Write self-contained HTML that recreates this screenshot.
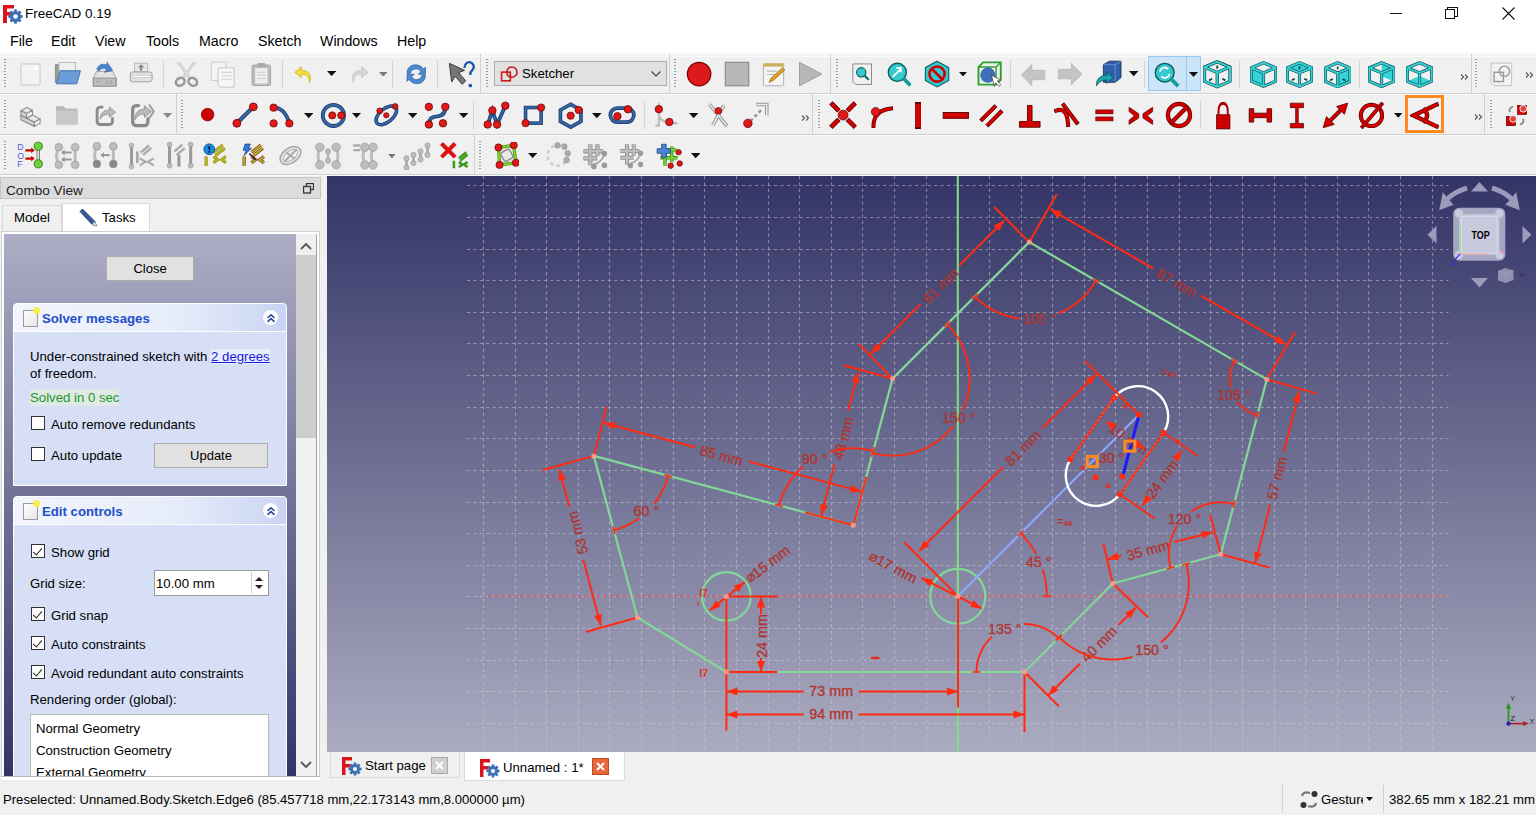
<!DOCTYPE html>
<html><head><meta charset="utf-8"><title>FreeCAD</title>
<style>
*{box-sizing:border-box;margin:0;padding:0}
html,body{width:1536px;height:815px;overflow:hidden;background:#f0f0f0;font-family:"Liberation Sans",sans-serif;color:#000}
.a{position:absolute}
.t{position:absolute;white-space:pre;line-height:1}
#title{left:0;top:0;width:1536px;height:53px;background:#fff}
#tb{left:0;top:53px;width:1536px;height:123px;background:#f0f0f0}
.row{position:absolute;left:0;width:1536px;height:1px;background:#cfcfcf;box-shadow:0 1px 0 #fafafa}
.vsep{position:absolute;width:1px;background:#d9d9d9}
.grip{position:absolute;width:2px;background-image:linear-gradient(#9a9a9a 50%,transparent 50%);background-size:2px 3px}
#view{left:327px;top:176px;width:1209px;height:576px;background:linear-gradient(#333366,#ababc1)}
#combo{left:0;top:176px;width:327px;height:609px;background:#f0f0f0}
.cb{position:absolute;width:14px;height:14px;border:1px solid #333;background:#fff}
.cb.on:after{content:"";position:absolute;left:3px;top:1px;width:4px;height:8px;border:solid #222;border-width:0 1.3px 1.3px 0;transform:rotate(40deg)}
.btn{position:absolute;background:#e1e1e1;border:1px solid #adadad;font-size:13px;text-align:center}
.box{position:absolute;background:#d6dff6;border:1px solid #fff;border-radius:4px 4px 0 0}
.boxh{position:absolute;left:0;top:0;right:0;height:28px;background:linear-gradient(90deg,#f2f5fc,#e6ecfa 60%,#c8d4f2);border-bottom:1px solid #fff;border-radius:4px 4px 0 0}
.boxh .t{font-weight:bold;color:#2150c8;font-size:13.2px}
.col{position:absolute;width:17px;height:17px;border-radius:50%;background:#fff;border:1px solid #c9d3ee}
</style></head><body>
<div id="title" class="a">
  <svg class="a" style="left:2px;top:4px" width="22" height="20" viewBox="0 0 22 20">
    <path d="M1 1h11v3.5H5v3.5h5v3.5H5V19H1z" fill="#d8141e"/>
    <g transform="translate(13.5 12.5)"><circle r="5.6" fill="#3f6fb4"/><circle r="2.2" fill="#fff"/>
    <g fill="#3f6fb4"><rect x="-1.4" y="-7.2" width="2.8" height="3"/><rect x="-1.4" y="4.2" width="2.8" height="3"/><rect x="-7.2" y="-1.4" width="3" height="2.8"/><rect x="4.2" y="-1.4" width="3" height="2.8"/>
    <rect x="-1.4" y="-7.2" width="2.8" height="3" transform="rotate(45)"/><rect x="-1.4" y="4.2" width="2.8" height="3" transform="rotate(45)"/><rect x="-7.2" y="-1.4" width="3" height="2.8" transform="rotate(45)"/><rect x="4.2" y="-1.4" width="3" height="2.8" transform="rotate(45)"/></g></g>
  </svg>
  <div class="t" style="left:25px;top:7px;font-size:13.5px;color:#000">FreeCAD 0.19</div>
  <div class="a" style="left:1390px;top:13px;width:12px;height:1px;background:#111"></div>
  <div class="a" style="left:1447px;top:7px;width:11px;height:10px;border:1px solid #111;border-left-width:1px"></div>
  <div class="a" style="left:1445px;top:9px;width:10px;height:10px;border:1px solid #111;background:#fff"></div>
  <svg class="a" style="left:1502px;top:7px" width="13" height="13"><path d="M0.5 0.5L12.5 12.5M12.5 0.5L0.5 12.5" stroke="#111" stroke-width="1.1"/></svg>
  <div class="t" style="left:10px;top:34px;font-size:14.2px">File</div>
  <div class="t" style="left:51px;top:34px;font-size:14.2px">Edit</div>
  <div class="t" style="left:95px;top:34px;font-size:14.2px">View</div>
  <div class="t" style="left:146px;top:34px;font-size:14.2px">Tools</div>
  <div class="t" style="left:199px;top:34px;font-size:14.2px">Macro</div>
  <div class="t" style="left:258px;top:34px;font-size:14.2px">Sketch</div>
  <div class="t" style="left:320px;top:34px;font-size:14.2px">Windows</div>
  <div class="t" style="left:397px;top:34px;font-size:14.2px">Help</div>
</div>
<div id="tb" class="a">
  <div class="row" style="top:-1px;height:4px;background:linear-gradient(#ffffff,#f0f0f0)"></div>
  <div class="row" style="top:40px"></div>
  <div class="row" style="top:81px"></div>
  <div class="row" style="top:121px"></div>
<div class="grip" style="left:3.7px;top:6px;height:30px"></div>
<div class="grip" style="left:486.3px;top:6px;height:30px"></div>
<div class="grip" style="left:673.5px;top:6px;height:30px"></div>
<div class="grip" style="left:836.0px;top:6px;height:30px"></div>
<div class="grip" style="left:1475.4px;top:6px;height:30px"></div>
<div class="vsep" style="left:163px;top:7px;height:28px;background:#d5d5d5"></div>
<div class="vsep" style="left:282px;top:7px;height:28px;background:#d5d5d5"></div>
<div class="vsep" style="left:392px;top:7px;height:28px;background:#d5d5d5"></div>
<div class="vsep" style="left:437px;top:7px;height:28px;background:#d5d5d5"></div>
<div class="vsep" style="left:1010px;top:7px;height:28px;background:#d5d5d5"></div>
<div class="vsep" style="left:1144px;top:7px;height:28px;background:#d5d5d5"></div>
<div class="vsep" style="left:1239px;top:7px;height:28px;background:#d5d5d5"></div>
<div class="vsep" style="left:1359px;top:7px;height:28px;background:#d5d5d5"></div>
<div class="vsep" style="left:480px;top:1px;height:39px;background:#d0d0d0"></div>
<div class="vsep" style="left:669px;top:1px;height:39px;background:#d0d0d0"></div>
<div class="vsep" style="left:830px;top:1px;height:39px;background:#d0d0d0"></div>
<div class="vsep" style="left:1471px;top:1px;height:39px;background:#d0d0d0"></div>
<svg class="a" style="left:19.0px;top:10.0px" width="23.0" height="23.0" viewBox="0 0 24 24" preserveAspectRatio="none"><rect x="2" y="1" width="20" height="22" rx="1.5" fill="#f3f3f3" stroke="#c4c4c4"/><circle cx="18" cy="5" r="2.2" fill="#fff"/></svg>
<svg class="a" style="left:53.0px;top:7.2px" width="28.6" height="28.6" viewBox="0 0 24 24" preserveAspectRatio="none"><path d="M2 4h6l1 1h8v14H2z" fill="#9a9a9a" stroke="#777" stroke-width="0.6"/><rect x="5" y="2" width="14" height="12" fill="#eee" stroke="#aaa" stroke-width="0.6"/><path d="M6 9h17l-3 11H3z" fill="#6b9bd8" stroke="#3d6fb0" stroke-width="0.8"/></svg>
<svg class="a" style="left:91.4px;top:7.8px" width="27.4" height="27.4" viewBox="0 0 24 24" preserveAspectRatio="none"><path d="M5 9h14l3 6v7H2v-7z" fill="#e2e2e2" stroke="#9a9a9a" stroke-width="0.8"/><rect x="2" y="15" width="20" height="7" fill="#bdbdbd" stroke="#8a8a8a" stroke-width="0.8"/><path d="M14 17v3M16 17v3M18 17v3M4 18h4" stroke="#999" stroke-width="0.8"/><path d="M5 7Q8 1 14 3.5V1l5 7-7 2 1.5-3Q9 5 7 9z" fill="#4a86cf" stroke="#2a5a9a" stroke-width="0.5"/></svg>
<svg class="a" style="left:128.4px;top:8.4px" width="26.3" height="26.3" viewBox="0 0 24 24" preserveAspectRatio="none"><rect x="6" y="2" width="12" height="8" fill="#e8e8e8" stroke="#aaa" stroke-width="0.7"/><path d="M12 3l-3 3h2v3h2V6h2z" fill="#888"/><rect x="2" y="10" width="20" height="9" rx="2" fill="#e0e0e0" stroke="#999" stroke-width="0.8"/><rect x="4" y="13" width="16" height="2" fill="#fff" stroke="#aaa" stroke-width="0.4"/></svg>
<svg class="a" style="left:174.2px;top:9.0px" width="25.0" height="25.0" viewBox="0 0 24 24" preserveAspectRatio="none"><path d="M4 0L15 15M20 0L9 15" stroke="#c4c4c4" stroke-width="2.6" stroke-linecap="round"/><path d="M4 0L15 15M20 0L9 15" stroke="#e8e8e8" stroke-width="1"/><ellipse cx="6" cy="19" rx="4.3" ry="3.6" transform="rotate(-30 6 19)" fill="none" stroke="#999" stroke-width="2.4"/><ellipse cx="18" cy="19" rx="4.3" ry="3.6" transform="rotate(30 18 19)" fill="none" stroke="#999" stroke-width="2.4"/></svg>
<svg class="a" style="left:209.4px;top:7.9px" width="27.3" height="27.3" viewBox="0 0 24 24" preserveAspectRatio="none"><rect x="2" y="1" width="13" height="16" fill="#f4f4f4" stroke="#c8c8c8" stroke-width="0.8"/><path d="M8 6h14v17H10l-2-2z" fill="#f6f6f6" stroke="#c0c0c0" stroke-width="0.8"/><path d="M11 10h9M11 13h9M11 16h9" stroke="#d0d0d0"/></svg>
<svg class="a" style="left:248.6px;top:9.2px" width="24.6" height="24.6" viewBox="0 0 24 24" preserveAspectRatio="none"><rect x="3" y="3" width="18" height="20" rx="1.5" fill="#bdbdbd" stroke="#999" stroke-width="0.8"/><rect x="6" y="6" width="12" height="15" fill="#eee"/><rect x="8" y="1" width="8" height="4" rx="1" fill="#aaa"/><path d="M8 10h8M8 13h8M8 16h8" stroke="#ccc"/></svg>
<svg class="a" style="left:293.5px;top:10.5px" width="22.0" height="22.0" viewBox="0 0 24 24" preserveAspectRatio="none"><path d="M8 3L1 9l7 6v-4c5 0 8 2 9 9 3-8-1-13-9-13z" fill="#f3dd3a" stroke="#c9a800" stroke-width="0.8"/></svg>
<svg class="a" style="left:326.5px;top:18.4px" width="9.3" height="5.1" viewBox="0 0 10 5.5"><path d="M0 0H10L5 5.5z" fill="#111"/></svg>
<svg class="a" style="left:346.8px;top:10.5px" width="22.0" height="22.0" viewBox="0 0 24 24" preserveAspectRatio="none"><path d="M16 3l7 6-7 6v-4c-5 0-8 2-9 9-3-8 1-13 9-13z" fill="#d6d6d6" stroke="#c0c0c0" stroke-width="0.8"/></svg>
<svg class="a" style="left:379.0px;top:18.7px" width="8.4" height="4.6" viewBox="0 0 10 5.5"><path d="M0 0H10L5 5.5z" fill="#777"/></svg>
<svg class="a" style="left:403.5px;top:9.2px" width="24.5" height="24.5" viewBox="0 0 24 24" preserveAspectRatio="none"><path d="M3 11C3 5 8 2 13 3c3 .5 5 2 6 4l2-2v7h-7l2.5-2.5C15 7 13 6.5 11 6.8 8 7.3 6.5 9 6.5 11z" fill="#4a8ad4" stroke="#2a5aa0" stroke-width="0.7"/><path d="M21 13c0 6-5 9-10 8-3-.5-5-2-6-4l-2 2v-7h7l-2.5 2.5C9 17 11 17.5 13 17.2 16 16.7 17.5 15 17.5 13z" fill="#4a8ad4" stroke="#2a5aa0" stroke-width="0.7"/></svg>
<svg class="a" style="left:446.6px;top:7.5px" width="28.0" height="28.0" viewBox="0 0 24 24" preserveAspectRatio="none"><path d="M2 2l13 6-5 2 6 7-3 3-6-7-3 5z" fill="#777" stroke="#333" stroke-width="0.8"/><path d="M15 6c0-3 2-5 4-5s4 2 4 4c0 3-3 3-3 6v1" fill="none" stroke="#1c58a8" stroke-width="2"/><circle cx="20" cy="21" r="1.6" fill="#1c58a8"/></svg>
<div class="a" style="left:494px;top:8px;width:173px;height:25px;background:#e1e1e1;border:1px solid #adadad"></div>
<svg class="a" style="left:500.0px;top:11.5px" width="19.0" height="19.0" viewBox="0 0 24 24" preserveAspectRatio="none"><rect x="2" y="9" width="11" height="11" fill="none" stroke="#cc1a1a" stroke-width="2"/><circle cx="15" cy="9" r="6.5" fill="none" stroke="#cc1a1a" stroke-width="2"/></svg>
<div class="t" style="left:522px;top:14px;font-size:13.2px">Sketcher</div>
<svg class="a" style="left:651px;top:18px" width="10" height="6"><path d="M0.5 0.5L5 5L9.5 0.5" fill="none" stroke="#444" stroke-width="1.2"/></svg>
<svg class="a" style="left:685.0px;top:7.4px" width="28.2" height="28.2" viewBox="0 0 24 24" preserveAspectRatio="none"><circle cx="12" cy="12" r="10" fill="#dd1a1a" stroke="#7a0000" stroke-width="1"/></svg>
<svg class="a" style="left:722.6px;top:7.4px" width="28.1" height="28.1" viewBox="0 0 24 24" preserveAspectRatio="none"><rect x="2" y="2" width="20" height="20" fill="#b8b8b8" stroke="#8a8a8a" stroke-width="1"/></svg>
<svg class="a" style="left:760.0px;top:8.0px" width="27.0" height="27.0" viewBox="0 0 24 24" preserveAspectRatio="none"><rect x="3" y="3" width="18" height="19" rx="1" fill="#f4f4f4" stroke="#aaa" stroke-width="0.8"/><rect x="3" y="2" width="18" height="3" fill="#c8b060"/><path d="M6 9h9M6 12h7" stroke="#bbb"/><path d="M8 19l2-4 10-9 2 2-10 9z" fill="#e8a020" stroke="#8a5a00" stroke-width="0.6"/></svg>
<svg class="a" style="left:796.4px;top:7.4px" width="28.1" height="28.1" viewBox="0 0 24 24" preserveAspectRatio="none"><path d="M3 2L22 12L3 22z" fill="#b8b8b8" stroke="#999" stroke-width="0.8"/></svg>
<svg class="a" style="left:851.0px;top:10.3px" width="22.4" height="22.4" viewBox="0 0 24 24" preserveAspectRatio="none"><path d="M2 1h20v22H5l-3-3z" fill="#f0f0f0" stroke="#555" stroke-width="0.7"/><circle cx="11" cy="10" r="5" fill="#36c8cc" stroke="#0a5a5c" stroke-width="1.2"/><path d="M14 13l5 5" stroke="#0a7a7c" stroke-width="2.5"/></svg>
<svg class="a" style="left:886.0px;top:7.9px" width="27.2" height="27.2" viewBox="0 0 24 24" preserveAspectRatio="none"><circle cx="10" cy="10" r="8" fill="#36c8cc" stroke="#0a5a5c" stroke-width="1.2"/><path d="M15.5 15.5l6 6" stroke="#159a9c" stroke-width="3.2"/><path d="M6 14l7-7M9 6h4v4" fill="none" stroke="#fff" stroke-width="1.6"/></svg>
<svg class="a" style="left:922.6px;top:7.4px" width="28.1" height="28.1" viewBox="0 0 24 24" preserveAspectRatio="none"><path d="M12 1l10 5.5v11L12 23 2 17.5v-11z" fill="#36c8cc" stroke="#0a5a5c" stroke-width="0.9"/><circle cx="12" cy="12" r="6.5" fill="none" stroke="#cc0000" stroke-width="2.2"/><path d="M7.5 7.5l9 9" stroke="#cc0000" stroke-width="2.2"/></svg>
<svg class="a" style="left:959.0px;top:18.8px" width="8.0" height="4.4" viewBox="0 0 10 5.5"><path d="M0 0H10L5 5.5z" fill="#111"/></svg>
<svg class="a" style="left:975.3px;top:7.4px" width="28.1" height="28.1" viewBox="0 0 24 24" preserveAspectRatio="none"><path d="M3 6l4-4h15v15l-4 4H3z" fill="none" stroke="#2aa02a" stroke-width="1.6"/><path d="M3 6h15v15M18 6l4-4" stroke="#2aa02a" stroke-width="1.2" fill="none"/><circle cx="11" cy="13" r="6.5" fill="#3e6fb8"/><path d="M14 13l8 4-3 1 3 3-1.5 1.5-3-3-1 3z" fill="#fff" stroke="#333" stroke-width="0.6"/></svg>
<svg class="a" style="left:1018.7px;top:7.5px" width="28.1" height="28.1" viewBox="0 0 24 24" preserveAspectRatio="none"><path d="M2 12l9-9v5h11v8H11v5z" fill="#c4c4c4" stroke="#b0b0b0" stroke-width="0.6"/></svg>
<svg class="a" style="left:1056.0px;top:7.4px" width="28.3" height="28.3" viewBox="0 0 24 24" preserveAspectRatio="none"><path d="M22 12l-9-9v5H2v8h11v5z" fill="#c4c4c4" stroke="#b0b0b0" stroke-width="0.6"/></svg>
<svg class="a" style="left:1093.6px;top:7.4px" width="28.2" height="28.2" viewBox="0 0 24 24" preserveAspectRatio="none"><path d="M8 4l5-3h10v14l-5 4H8z" fill="#2e5fa8" stroke="#132a50" stroke-width="0.7"/><path d="M8 4h10v15M18 4l5-3" stroke="#6a9ae0" stroke-width="0.7" fill="none"/><path d="M2 22c0-6 3-9 9-9v-3l5 5-5 5v-3c-4 0-6 1-9 5z" fill="#1aa5a8" stroke="#0a4a4c" stroke-width="0.6"/></svg>
<svg class="a" style="left:1128.8px;top:18.4px" width="9.4" height="5.2" viewBox="0 0 10 5.5"><path d="M0 0H10L5 5.5z" fill="#111"/></svg>
<div class="a" style="left:1148px;top:3px;width:53px;height:35px;background:#cce4f7;border:1px solid #99c9ef"></div>
<div class="a" style="left:1186px;top:4px;width:1px;height:33px;background:#99c9ef"></div>
<svg class="a" style="left:1153.4px;top:8.0px" width="28.1" height="28.1" viewBox="0 0 24 24" preserveAspectRatio="none"><circle cx="10" cy="10" r="8" fill="#36c8cc" stroke="#0a5a5c" stroke-width="1.2"/><path d="M15.5 15.5l6 6" stroke="#159a9c" stroke-width="3.2"/><path d="M6 9a4 4 0 0 1 7-2M14 11a4 4 0 0 1-7 2" fill="none" stroke="#fff" stroke-width="1.5"/></svg>
<svg class="a" style="left:1189.0px;top:18.5px" width="9.0" height="5.0" viewBox="0 0 10 5.5"><path d="M0 0H10L5 5.5z" fill="#111"/></svg>
<svg class="a" style="left:1203.0px;top:7.2px" width="28.5" height="28.5" viewBox="0 0 28 28" preserveAspectRatio="none"><path d="M14,1.8 L26.5,7 L26.5,21 L14,26.3 L1.5,21 L1.5,7Z M1.5,7 L14,12.3 L26.5,7 M14,12.3 L14,26.3" fill="none" stroke="#0b4446" stroke-width="3.2" stroke-linejoin="round"/><path d="M14,1.8 L26.5,7 L26.5,21 L14,26.3 L1.5,21 L1.5,7Z M1.5,7 L14,12.3 L26.5,7 M14,12.3 L14,26.3" fill="none" stroke="#35d0d4" stroke-width="2" stroke-linejoin="round"/><path d="M14 5.5v3M6 20l3-1.5M22 20l-3-1.5" stroke="#0b4446" stroke-width="1.7"/></svg>
<svg class="a" style="left:1249.6px;top:8.0px" width="27.0" height="27.0" viewBox="0 0 28 28" preserveAspectRatio="none"><polygon points="1.5,7 14,12.3 14,26.3 1.5,21" fill="#36d4d8"/><path d="M14,1.8 L26.5,7 L26.5,21 L14,26.3 L1.5,21 L1.5,7Z M1.5,7 L14,12.3 L26.5,7 M14,12.3 L14,26.3" fill="none" stroke="#0b4446" stroke-width="3.2" stroke-linejoin="round"/><path d="M14,1.8 L26.5,7 L26.5,21 L14,26.3 L1.5,21 L1.5,7Z M1.5,7 L14,12.3 L26.5,7 M14,12.3 L14,26.3" fill="none" stroke="#35d0d4" stroke-width="2" stroke-linejoin="round"/></svg>
<svg class="a" style="left:1285.7px;top:8.0px" width="27.0" height="27.0" viewBox="0 0 28 28" preserveAspectRatio="none"><polygon points="14,1.8 26.5,7 14,12.3 1.5,7" fill="#36d4d8"/><path d="M14,1.8 L26.5,7 L26.5,21 L14,26.3 L1.5,21 L1.5,7Z M1.5,7 L14,12.3 L26.5,7 M14,12.3 L14,26.3" fill="none" stroke="#0b4446" stroke-width="3.2" stroke-linejoin="round"/><path d="M14,1.8 L26.5,7 L26.5,21 L14,26.3 L1.5,21 L1.5,7Z M1.5,7 L14,12.3 L26.5,7 M14,12.3 L14,26.3" fill="none" stroke="#35d0d4" stroke-width="2" stroke-linejoin="round"/><path d="M14 5.5v3M6 20l3-1.5M22 20l-3-1.5" stroke="#0b4446" stroke-width="1.7"/></svg>
<svg class="a" style="left:1323.6px;top:7.8px" width="27.4" height="27.4" viewBox="0 0 28 28" preserveAspectRatio="none"><polygon points="14,12.3 26.5,7 26.5,21 14,26.3" fill="#36d4d8"/><path d="M14,1.8 L26.5,7 L26.5,21 L14,26.3 L1.5,21 L1.5,7Z M1.5,7 L14,12.3 L26.5,7 M14,12.3 L14,26.3" fill="none" stroke="#0b4446" stroke-width="3.2" stroke-linejoin="round"/><path d="M14,1.8 L26.5,7 L26.5,21 L14,26.3 L1.5,21 L1.5,7Z M1.5,7 L14,12.3 L26.5,7 M14,12.3 L14,26.3" fill="none" stroke="#35d0d4" stroke-width="2" stroke-linejoin="round"/><path d="M14 5.5v3M6 20l3-1.5M22 20l-3-1.5" stroke="#0b4446" stroke-width="1.7"/></svg>
<svg class="a" style="left:1368.0px;top:7.9px" width="27.2" height="27.2" viewBox="0 0 28 28" preserveAspectRatio="none"><polygon points="14,1.8 26.5,7 26.5,21 14,15.5" fill="#36d4d8"/><path d="M14,1.8 L26.5,7 L26.5,21 L14,26.3 L1.5,21 L1.5,7Z M1.5,7 L14,12.3 L26.5,7 M14,12.3 L14,26.3" fill="none" stroke="#0b4446" stroke-width="3.2" stroke-linejoin="round"/><path d="M14,1.8 L26.5,7 L26.5,21 L14,26.3 L1.5,21 L1.5,7Z M1.5,7 L14,12.3 L26.5,7 M14,12.3 L14,26.3" fill="none" stroke="#35d0d4" stroke-width="2" stroke-linejoin="round"/></svg>
<svg class="a" style="left:1405.5px;top:8.0px" width="27.1" height="27.1" viewBox="0 0 28 28" preserveAspectRatio="none"><polygon points="14,15.5 26.5,21 14,26.3 1.5,21" fill="#36d4d8"/><path d="M14,1.8 L26.5,7 L26.5,21 L14,26.3 L1.5,21 L1.5,7Z M1.5,7 L14,12.3 L26.5,7 M14,12.3 L14,26.3" fill="none" stroke="#0b4446" stroke-width="3.2" stroke-linejoin="round"/><path d="M14,1.8 L26.5,7 L26.5,21 L14,26.3 L1.5,21 L1.5,7Z M1.5,7 L14,12.3 L26.5,7 M14,12.3 L14,26.3" fill="none" stroke="#35d0d4" stroke-width="2" stroke-linejoin="round"/></svg>
<svg class="a" style="left:1459.5px;top:20.0px" width="9" height="8"><path d="M1 1.5L3.5 4L1 6.5M5 1.5L7.5 4L5 6.5" fill="none" stroke="#555" stroke-width="1.1"/></svg>
<svg class="a" style="left:1525.3px;top:18.0px" width="9" height="8"><path d="M1 1.5L3.5 4L1 6.5M5 1.5L7.5 4L5 6.5" fill="none" stroke="#555" stroke-width="1.1"/></svg>
<svg class="a" style="left:1489.3px;top:9.1px" width="24.7" height="24.7" viewBox="0 0 24 24" preserveAspectRatio="none"><path d="M2 1h20v22H5l-3-3z" fill="#f2f2f2" stroke="#bbb" stroke-width="0.8"/><rect x="5" y="10" width="9" height="9" fill="none" stroke="#999" stroke-width="1.4"/><circle cx="15" cy="9" r="5" fill="none" stroke="#999" stroke-width="1.4"/></svg>
<div class="grip" style="left:3.7px;top:47px;height:30px"></div>
<div class="grip" style="left:181.3px;top:47px;height:30px"></div>
<div class="grip" style="left:817.5px;top:47px;height:30px"></div>
<div class="grip" style="left:1489.5px;top:47px;height:30px"></div>
<div class="vsep" style="left:473px;top:48px;height:28px;background:#d5d5d5"></div>
<div class="vsep" style="left:644px;top:48px;height:28px;background:#d5d5d5"></div>
<div class="vsep" style="left:1200px;top:48px;height:28px;background:#d5d5d5"></div>
<div class="vsep" style="left:176px;top:41px;height:40px;background:#d0d0d0"></div>
<div class="vsep" style="left:812px;top:41px;height:40px;background:#d0d0d0"></div>
<div class="vsep" style="left:1484px;top:41px;height:40px;background:#d0d0d0"></div>
<svg class="a" style="left:18.7px;top:50.8px" width="23.0" height="23.0" viewBox="0 0 24 24" preserveAspectRatio="none"><g fill="#e6e6e6" stroke="#8a8a8a" stroke-width="1.1" stroke-linejoin="round"><path d="M2 7L8 3.5L14 6.5L8 10z"/><path d="M2 7L8 10V15L2 12z" fill="#d0d0d0"/><path d="M8 10L14 6.5V11.5L8 15z" fill="#f2f2f2"/><path d="M8 15L14 11.5L22 15.5L16 19z"/><path d="M2 12L16 19V23.5L2 16.5z" fill="#d0d0d0"/><path d="M16 19L22 15.5V20L16 23.5z" fill="#f2f2f2"/></g></svg>
<svg class="a" style="left:54.0px;top:49.4px" width="25.7" height="25.7" viewBox="0 0 24 24" preserveAspectRatio="none"><path d="M2 4h7l2 2h11v15H2z" fill="#b8b8b8"/><rect x="2" y="8" width="20" height="13" fill="#c8c8c8"/></svg>
<svg class="a" style="left:92.6px;top:50.0px" width="24.6" height="24.6" viewBox="0 0 24 24" preserveAspectRatio="none"><path d="M9 4H7a3 3 0 0 0-3 3v11a3 3 0 0 0 3 3h9a3 3 0 0 0 3-3v-3" fill="none" stroke="#8a8a8a" stroke-width="2.8" stroke-linecap="round"/><path d="M7 16c0-6 3-9 9-9V4l6 5-6 5v-3c-4 0-7 1-9 5z" fill="#bbb" stroke="#888" stroke-width="0.7"/></svg>
<svg class="a" style="left:127.7px;top:48.2px" width="28.1" height="28.1" viewBox="0 0 24 24" preserveAspectRatio="none"><path d="M9 4H7a3 3 0 0 0-3 3v11a3 3 0 0 0 3 3h7a3 3 0 0 0 3-3v-3" fill="none" stroke="#8a8a8a" stroke-width="2.8" stroke-linecap="round"/><path d="M6 16c0-6 3-9 8-9V4l6 5-6 5v-3c-3 0-6 1-8 5z" fill="#bbb" stroke="#888" stroke-width="0.7"/><path d="M18 3l4 6-4 6" fill="none" stroke="#999" stroke-width="1.6"/></svg>
<svg class="a" style="left:163.0px;top:60.0px" width="9.0" height="5.0" viewBox="0 0 10 5.5"><path d="M0 0H10L5 5.5z" fill="#888"/></svg>
<svg class="a" style="left:200.4px;top:54.4px" width="15.2" height="15.2" viewBox="0 0 24 24" preserveAspectRatio="none"><circle cx="12" cy="12" r="10" fill="#cc0000" stroke="#6a0000" stroke-width="1"/></svg>
<svg class="a" style="left:230.8px;top:48.2px" width="28.2" height="28.2" viewBox="0 0 24 24" preserveAspectRatio="none"><path d="M5 19L19 5" stroke="#1c3a6a" stroke-width="3.6"/><path d="M5 19L19 5" stroke="#3465a4" stroke-width="2.2"/><circle cx="5" cy="19" r="3.4" fill="#e01818" stroke="#5c0000" stroke-width="0.6"/><circle cx="19" cy="5" r="3.4" fill="#e01818" stroke="#5c0000" stroke-width="0.6"/></svg>
<svg class="a" style="left:268.3px;top:48.8px" width="27.0" height="27.0" viewBox="0 0 24 24" preserveAspectRatio="none"><path d="M5 5Q15 5 19 19" fill="none" stroke="#1c3a6a" stroke-width="3.4"/><path d="M5 5Q15 5 19 19" fill="none" stroke="#3465a4" stroke-width="2"/><circle cx="5" cy="5" r="3.3" fill="#e01818" stroke="#5c0000" stroke-width="0.6"/><circle cx="19" cy="19" r="3.3" fill="#e01818" stroke="#5c0000" stroke-width="0.6"/><circle cx="5" cy="19" r="3.3" fill="#e01818" stroke="#5c0000" stroke-width="0.6"/></svg>
<svg class="a" style="left:303.5px;top:59.9px" width="9.4" height="5.2" viewBox="0 0 10 5.5"><path d="M0 0H10L5 5.5z" fill="#111"/></svg>
<svg class="a" style="left:320.0px;top:48.9px" width="26.8" height="26.8" viewBox="0 0 24 24" preserveAspectRatio="none"><circle cx="12" cy="12" r="9.5" fill="none" stroke="#1c3a6a" stroke-width="3.4"/><circle cx="12" cy="12" r="9.5" fill="none" stroke="#3465a4" stroke-width="2"/><circle cx="11" cy="12" r="3.2" fill="#e01818" stroke="#5c0000" stroke-width="0.6"/><circle cx="19" cy="12" r="3.2" fill="#e01818" stroke="#5c0000" stroke-width="0.6"/></svg>
<svg class="a" style="left:352.0px;top:60.0px" width="9.0" height="5.0" viewBox="0 0 10 5.5"><path d="M0 0H10L5 5.5z" fill="#111"/></svg>
<svg class="a" style="left:373.4px;top:49.0px" width="26.6" height="26.6" viewBox="0 0 24 24" preserveAspectRatio="none"><ellipse cx="12" cy="12" rx="11" ry="6" transform="rotate(-40 12 12)" fill="none" stroke="#1c3a6a" stroke-width="3.2"/><ellipse cx="12" cy="12" rx="11" ry="6" transform="rotate(-40 12 12)" fill="none" stroke="#3465a4" stroke-width="1.8"/><circle cx="6" cy="8" r="2.6" fill="#e01818" stroke="#5c0000" stroke-width="0.6"/><circle cx="20" cy="4" r="2.6" fill="#e01818" stroke="#5c0000" stroke-width="0.6"/><circle cx="12" cy="12" r="2.4" fill="#e01818" stroke="#5c0000" stroke-width="0.6"/></svg>
<svg class="a" style="left:407.8px;top:59.9px" width="9.4" height="5.2" viewBox="0 0 10 5.5"><path d="M0 0H10L5 5.5z" fill="#111"/></svg>
<svg class="a" style="left:423.4px;top:48.2px" width="28.2" height="28.2" viewBox="0 0 24 24" preserveAspectRatio="none"><path d="M5 20Q5 13 12 13T19 5" fill="none" stroke="#1c3a6a" stroke-width="3.2"/><path d="M5 20Q5 13 12 13T19 5" fill="none" stroke="#3465a4" stroke-width="1.8"/><circle cx="5" cy="5" r="3.2" fill="#e01818" stroke="#5c0000" stroke-width="0.6"/><circle cx="19" cy="5" r="3.2" fill="#e01818" stroke="#5c0000" stroke-width="0.6"/><circle cx="5" cy="20" r="3.2" fill="#e01818" stroke="#5c0000" stroke-width="0.6"/><circle cx="17" cy="19" r="3.2" fill="#e01818" stroke="#5c0000" stroke-width="0.6"/></svg>
<svg class="a" style="left:458.8px;top:60.0px" width="9.2" height="5.1" viewBox="0 0 10 5.5"><path d="M0 0H10L5 5.5z" fill="#111"/></svg>
<svg class="a" style="left:482.8px;top:48.2px" width="28.2" height="28.2" viewBox="0 0 24 24" preserveAspectRatio="none"><path d="M4 20L8 8L12 20L19 4" fill="none" stroke="#1c3a6a" stroke-width="3.2"/><path d="M4 20L8 8L12 20L19 4" fill="none" stroke="#3465a4" stroke-width="1.8"/><circle cx="4" cy="20" r="3.2" fill="#e01818" stroke="#5c0000" stroke-width="0.6"/><circle cx="8" cy="8" r="3.2" fill="#e01818" stroke="#5c0000" stroke-width="0.6"/><circle cx="12" cy="20" r="3.2" fill="#e01818" stroke="#5c0000" stroke-width="0.6"/><circle cx="19" cy="4" r="3.2" fill="#e01818" stroke="#5c0000" stroke-width="0.6"/></svg>
<svg class="a" style="left:520.3px;top:48.9px" width="26.7" height="26.7" viewBox="0 0 24 24" preserveAspectRatio="none"><rect x="5" y="5" width="14" height="14" fill="none" stroke="#1c3a6a" stroke-width="3.2"/><rect x="5" y="5" width="14" height="14" fill="none" stroke="#3465a4" stroke-width="1.8"/><circle cx="5" cy="19" r="3.3" fill="#e01818" stroke="#5c0000" stroke-width="0.6"/><circle cx="19" cy="5" r="3.3" fill="#e01818" stroke="#5c0000" stroke-width="0.6"/></svg>
<svg class="a" style="left:557.0px;top:48.6px" width="27.4" height="27.4" viewBox="0 0 24 24" preserveAspectRatio="none"><path d="M12 2l9 5v10l-9 5-9-5V7z" fill="none" stroke="#1c3a6a" stroke-width="3.2"/><path d="M12 2l9 5v10l-9 5-9-5V7z" fill="none" stroke="#3465a4" stroke-width="1.8"/><circle cx="12" cy="12" r="3.2" fill="#e01818" stroke="#5c0000" stroke-width="0.6"/><circle cx="19" cy="7" r="3.2" fill="#e01818" stroke="#5c0000" stroke-width="0.6"/></svg>
<svg class="a" style="left:592.0px;top:59.9px" width="9.6" height="5.3" viewBox="0 0 10 5.5"><path d="M0 0H10L5 5.5z" fill="#111"/></svg>
<svg class="a" style="left:607.8px;top:48.2px" width="28.2" height="28.2" viewBox="0 0 24 24" preserveAspectRatio="none"><rect x="2" y="6" width="20" height="12" rx="6" fill="none" stroke="#1c3a6a" stroke-width="3.2"/><rect x="2" y="6" width="20" height="12" rx="6" fill="none" stroke="#3465a4" stroke-width="1.8"/><circle cx="8" cy="13" r="3.2" fill="#e01818" stroke="#5c0000" stroke-width="0.6"/><circle cx="17" cy="7" r="3.2" fill="#e01818" stroke="#5c0000" stroke-width="0.6"/></svg>
<svg class="a" style="left:653.0px;top:48.3px" width="28.0" height="28.0" viewBox="0 0 24 24" preserveAspectRatio="none"><path d="M5 2v9Q5 18 16 19h5M2 21h4M5 14v8" fill="none" stroke="#bbb" stroke-width="1.8"/><circle cx="5" cy="7" r="3.2" fill="#e01818" stroke="#5c0000" stroke-width="0.6"/><circle cx="14" cy="18" r="3.2" fill="#e01818" stroke="#5c0000" stroke-width="0.6"/></svg>
<svg class="a" style="left:689.0px;top:59.9px" width="9.4" height="5.2" viewBox="0 0 10 5.5"><path d="M0 0H10L5 5.5z" fill="#111"/></svg>
<svg class="a" style="left:704.7px;top:49.0px" width="26.6" height="26.6" viewBox="0 0 24 24" preserveAspectRatio="none"><path d="M4 2l16 20M17 3L7 21" stroke="#8a8a8a" stroke-width="3"/><path d="M4 2l16 20M17 3L7 21" stroke="#f0f0f0" stroke-width="1.4"/><circle cx="12" cy="8" r="3" fill="#e01818" stroke="#5c0000" stroke-width="0.6"/></svg>
<svg class="a" style="left:742.0px;top:48.2px" width="28.3" height="28.3" viewBox="0 0 24 24" preserveAspectRatio="none"><path d="M7 17L17 7" stroke="#999" stroke-width="2.2" stroke-dasharray="3 2"/><path d="M12 3h9v9" fill="none" stroke="#999" stroke-width="3"/><path d="M12 3h9v9" fill="none" stroke="#eee" stroke-width="1.2"/><circle cx="5" cy="19" r="3.6" fill="#e01818" stroke="#5c0000" stroke-width="0.6"/></svg>
<svg class="a" style="left:800.7px;top:61.0px" width="9" height="8"><path d="M1 1.5L3.5 4L1 6.5M5 1.5L7.5 4L5 6.5" fill="none" stroke="#555" stroke-width="1.1"/></svg>
<svg class="a" style="left:829.0px;top:48.2px" width="28.2" height="28.2" viewBox="0 0 24 24" preserveAspectRatio="none"><path d="M3 3l4 4M21 3l-4 4M3 21l4-4M21 21l-4-4" fill="none" stroke="#5a0000" stroke-width="4.0" stroke-linecap="square"/><path d="M3 3l4 4M21 3l-4 4M3 21l4-4M21 21l-4-4" fill="none" stroke="#d40000" stroke-width="2.8" stroke-linecap="square"/><circle cx="12" cy="12" r="4.2" fill="#e01818" stroke="#5c0000" stroke-width="0.6"/></svg>
<svg class="a" style="left:868.4px;top:49.1px" width="26.3" height="26.3" viewBox="0 0 24 24" preserveAspectRatio="none"><path d="M5 22Q5 8 21 6" fill="none" stroke="#5a0000" stroke-width="3.5999999999999996" stroke-linecap="square"/><path d="M5 22Q5 8 21 6" fill="none" stroke="#d40000" stroke-width="2.4" stroke-linecap="square"/><circle cx="7" cy="9" r="4" fill="#e01818" stroke="#5c0000" stroke-width="0.6"/></svg>
<svg class="a" style="left:914.6px;top:49.0px" width="6.4" height="26.7" viewBox="0 0 24 24" preserveAspectRatio="none"><rect x="1" y="0.5" width="22" height="23" fill="#d40000" stroke="#5a0000" stroke-width="2"/></svg>
<svg class="a" style="left:941.5px;top:48.4px" width="27.7" height="27.7" viewBox="0 0 24 24" preserveAspectRatio="none"><rect x="1" y="10" width="22" height="5" fill="#d40000" stroke="#5a0000" stroke-width="0.8"/></svg>
<svg class="a" style="left:979.0px;top:49.9px" width="24.7" height="24.7" viewBox="0 0 24 24" preserveAspectRatio="none"><path d="M3 16L15 4M9 21L21 9" fill="none" stroke="#5a0000" stroke-width="4.0" stroke-linecap="square"/><path d="M3 16L15 4M9 21L21 9" fill="none" stroke="#d40000" stroke-width="2.8" stroke-linecap="square"/></svg>
<svg class="a" style="left:1016.0px;top:48.5px" width="27.5" height="27.5" viewBox="0 0 24 24" preserveAspectRatio="none"><path d="M10 3h4v14h7v5H3v-5h7z" fill="#d40000" stroke="#5a0000" stroke-width="0.8"/></svg>
<svg class="a" style="left:1054.0px;top:49.3px" width="26.0" height="26.0" viewBox="0 0 24 24" preserveAspectRatio="none"><path d="M2 8Q12 4 13 21M9 3l12 16" fill="none" stroke="#5a0000" stroke-width="3.8" stroke-linecap="square"/><path d="M2 8Q12 4 13 21M9 3l12 16" fill="none" stroke="#d40000" stroke-width="2.6" stroke-linecap="square"/></svg>
<svg class="a" style="left:1095.0px;top:52.9px" width="18.8" height="18.8" viewBox="0 0 24 24" preserveAspectRatio="none"><rect x="1" y="5" width="22" height="5" fill="#d40000" stroke="#5a0000" stroke-width="0.8"/><rect x="1" y="14" width="22" height="5" fill="#d40000" stroke="#5a0000" stroke-width="0.8"/></svg>
<svg class="a" style="left:1127.9px;top:49.5px" width="25.7" height="25.7" viewBox="0 0 24 24" preserveAspectRatio="none"><path d="M1 4l9 6v4l-9 6v-4l5-4-5-4zM23 4l-9 6v4l9 6v-4l-5-4 5-4z" fill="#d40000" stroke="#5a0000" stroke-width="0.7"/></svg>
<svg class="a" style="left:1165.0px;top:48.3px" width="28.0" height="28.0" viewBox="0 0 24 24" preserveAspectRatio="none"><circle cx="12" cy="12" r="9.5" fill="none" stroke="#5a0000" stroke-width="3.6"/><circle cx="12" cy="12" r="9.5" fill="none" stroke="#d40000" stroke-width="2.4"/><path d="M6 18L18 6" fill="none" stroke="#5a0000" stroke-width="3.5999999999999996" stroke-linecap="square"/><path d="M6 18L18 6" fill="none" stroke="#d40000" stroke-width="2.4" stroke-linecap="square"/></svg>
<svg class="a" style="left:1213.9px;top:49.0px" width="18.3" height="28.0" viewBox="0 0 24 24" preserveAspectRatio="none"><path d="M6 11V7a6 6 0 0 1 12 0v4" fill="none" stroke="#aa0000" stroke-width="2.6"/><rect x="3" y="11" width="18" height="12" fill="#d40000" stroke="#5a0000" stroke-width="0.8"/><path d="M3 14h18M3 17h18M3 20h18" stroke="#a00000" stroke-width="0.6"/></svg>
<svg class="a" style="left:1247.0px;top:48.9px" width="26.8" height="26.8" viewBox="0 0 24 24" preserveAspectRatio="none"><path d="M2 6h4v4h12V6h4v12h-4v-4H6v4H2z" fill="#d40000" stroke="#5a0000" stroke-width="0.8"/></svg>
<svg class="a" style="left:1288.5px;top:48.5px" width="15.9" height="27.0" viewBox="0 0 24 24" preserveAspectRatio="none"><path d="M2 1h20v4h-8v14h8v4H2v-4h8V5H2z" fill="#d40000" stroke="#5a0000" stroke-width="0.8"/></svg>
<svg class="a" style="left:1321.6px;top:48.8px" width="26.9" height="26.9" viewBox="0 0 24 24" preserveAspectRatio="none"><path d="M6 18L18 6" fill="none" stroke="#5a0000" stroke-width="3.5999999999999996" stroke-linecap="square"/><path d="M6 18L18 6" fill="none" stroke="#d40000" stroke-width="2.4" stroke-linecap="square"/><path d="M1 23l3-10 7 7zM23 1l-3 10-7-7z" fill="#d40000" stroke="#5a0000" stroke-width="0.7"/></svg>
<svg class="a" style="left:1358.3px;top:48.8px" width="26.9" height="26.9" viewBox="0 0 24 24" preserveAspectRatio="none"><circle cx="12" cy="12" r="9.5" fill="none" stroke="#5a0000" stroke-width="3.6"/><circle cx="12" cy="12" r="9.5" fill="none" stroke="#d40000" stroke-width="2.4"/><path d="M4 22L21 2" fill="none" stroke="#5a0000" stroke-width="3.4000000000000004" stroke-linecap="square"/><path d="M4 22L21 2" fill="none" stroke="#d40000" stroke-width="2.2" stroke-linecap="square"/></svg>
<svg class="a" style="left:1393.8px;top:60.2px" width="8.5" height="4.7" viewBox="0 0 10 5.5"><path d="M0 0H10L5 5.5z" fill="#111"/></svg>
<div class="a" style="left:1405px;top:42px;width:39px;height:38px;border:3px solid #ff8a20"></div>
<svg class="a" style="left:1410.0px;top:47.8px" width="29.0" height="29.0" viewBox="0 0 24 24" preserveAspectRatio="none"><path d="M22 3L3 12L22 21M12 7.5Q16.5 12 12 16.5" fill="none" stroke="#5a0000" stroke-width="3.5999999999999996" stroke-linecap="square"/><path d="M22 3L3 12L22 21M12 7.5Q16.5 12 12 16.5" fill="none" stroke="#d40000" stroke-width="2.4" stroke-linecap="square"/></svg>
<svg class="a" style="left:1474.2px;top:60.0px" width="9" height="8"><path d="M1 1.5L3.5 4L1 6.5M5 1.5L7.5 4L5 6.5" fill="none" stroke="#555" stroke-width="1.1"/></svg>
<svg class="a" style="left:1502.7px;top:48.8px" width="27.0" height="27.0" viewBox="0 0 24 24" preserveAspectRatio="none"><rect x="13" y="3" width="8" height="8" fill="#d40000" stroke="#5a0000" stroke-width="0.6"/><circle cx="18" cy="6" r="3" fill="#e04040" stroke="#fff" stroke-width="0.8"/><rect x="3" y="13" width="8" height="8" fill="#d40000" stroke="#5a0000" stroke-width="0.6"/><circle cx="9" cy="15" r="3" fill="#e04040" stroke="#fff" stroke-width="0.8"/><path d="M9 4Q5 5 6 9M15 20q4-1 3-5" fill="none" stroke="#888" stroke-width="1.6"/></svg>
<div class="grip" style="left:3.7px;top:88px;height:30px"></div>
<div class="grip" style="left:479.3px;top:88px;height:30px"></div>
<div class="vsep" style="left:474px;top:82px;height:39px;background:#d0d0d0"></div>
<svg class="a" style="left:15.6px;top:88.4px" width="28.1" height="28.1" viewBox="0 0 24 24" preserveAspectRatio="none"><text x="1" y="7.5" font-family="Liberation Sans" font-size="7.5" fill="#4a5ad8">D</text><text x="1" y="15" font-family="Liberation Sans" font-size="7.5" fill="#4a5ad8">O</text><text x="1" y="22.5" font-family="Liberation Sans" font-size="7.5" fill="#4a5ad8">F</text><path d="M8 8h6M8 15h6" stroke="#cc0000" stroke-width="2"/><path d="M13 5.5l3 2.5-3 2.5zM13 12.5l3 2.5-3 2.5z" fill="#cc0000"/><path d="M19 5v14" stroke="#777" stroke-width="3"/><path d="M19 5v14" stroke="#eee" stroke-width="1.3"/><circle cx="19" cy="4.5" r="3.5" fill="#6ad23a" stroke="#2a6a10" stroke-width="0.7"/><circle cx="19" cy="19.5" r="3.5" fill="#6ad23a" stroke="#2a6a10" stroke-width="0.7"/></svg>
<svg class="a" style="left:53.0px;top:88.5px" width="28.0" height="28.0" viewBox="0 0 24 24" preserveAspectRatio="none"><path d="M5 5Q1 12 5 19M19 5v14" fill="none" stroke="#bbb" stroke-width="2.6"/><path d="M16 9H8M16 15H8" stroke="#999" stroke-width="1.8"/><path d="M7 9l3-2.5v5zM7 15l3-2.5v5z" fill="#999"/><circle cx="5" cy="4.5" r="3.3" fill="#bdbdbd" stroke="#999" stroke-width="0.6"/><circle cx="5" cy="19.5" r="3.3" fill="#bdbdbd" stroke="#999" stroke-width="0.6"/><circle cx="19" cy="4.5" r="3.3" fill="#bdbdbd" stroke="#999" stroke-width="0.6"/><circle cx="19" cy="19.5" r="3.3" fill="#bdbdbd" stroke="#999" stroke-width="0.6"/></svg>
<svg class="a" style="left:90.6px;top:88.4px" width="28.2" height="28.2" viewBox="0 0 24 24" preserveAspectRatio="none"><path d="M5 5Q1 12 5 19M19 5v14" fill="none" stroke="#bbb" stroke-width="2.6"/><path d="M16 12H9" stroke="#999" stroke-width="1.8"/><path d="M8 12l3-2.5v5z" fill="#999"/><circle cx="5" cy="4.5" r="3.3" fill="#bdbdbd" stroke="#999" stroke-width="0.6"/><circle cx="5" cy="19.5" r="3.3" fill="#888" stroke="#999" stroke-width="0.6"/><circle cx="19" cy="4.5" r="3.3" fill="#bdbdbd" stroke="#999" stroke-width="0.6"/><circle cx="19" cy="19.5" r="3.3" fill="#888" stroke="#999" stroke-width="0.6"/></svg>
<svg class="a" style="left:128.0px;top:88.5px" width="28.0" height="28.0" viewBox="0 0 24 24" preserveAspectRatio="none"><path d="M3 3v18" stroke="#999" stroke-width="2.6"/><circle cx="3" cy="3" r="2" fill="#bdbdbd" stroke="#999" stroke-width="0.6"/><circle cx="3" cy="21" r="2" fill="#bdbdbd" stroke="#999" stroke-width="0.6"/><path d="M8 8v10" stroke="#aaa" stroke-width="2.4"/><path d="M11 9l7-6M13 11l7-6" stroke="#aaa" stroke-width="2"/><path d="M10 14l5 3-5 3M22 14l-5 3 5 3" fill="none" stroke="#aaa" stroke-width="1.8"/></svg>
<svg class="a" style="left:165.6px;top:88.4px" width="28.2" height="28.2" viewBox="0 0 24 24" preserveAspectRatio="none"><path d="M3 3v18M21 3v18M11 12v10" stroke="#999" stroke-width="2.6"/><circle cx="3" cy="3" r="2" fill="#bdbdbd" stroke="#999" stroke-width="0.6"/><circle cx="3" cy="21" r="2" fill="#bdbdbd" stroke="#999" stroke-width="0.6"/><circle cx="21" cy="3" r="2" fill="#bdbdbd" stroke="#999" stroke-width="0.6"/><circle cx="21" cy="21" r="2" fill="#bdbdbd" stroke="#999" stroke-width="0.6"/><path d="M7 9l7-6M9 12l7-6" stroke="#aaa" stroke-width="2"/></svg>
<svg class="a" style="left:203.0px;top:90.0px" width="25.0" height="25.0" viewBox="0 0 24 24" preserveAspectRatio="none"><path d="M3 13v9M10 13l4 3-4 3M22 13l-4 3 4 3M10 9l9-7M12 12l9-7" fill="none" stroke="#e06a10" stroke-width="3"/><path d="M3 13v9M10 13l4 3-4 3M22 13l-4 3 4 3M10 9l9-7M12 12l9-7" fill="none" stroke="#7ad82a" stroke-width="1.6"/><circle cx="6" cy="6" r="5.2" fill="#1a8ae0" stroke="#0a3a70" stroke-width="0.7"/><path d="M6 3v3.5" stroke="#000" stroke-width="1.4"/><circle cx="6" cy="8.5" r="0.8" fill="#000"/></svg>
<svg class="a" style="left:240.6px;top:90.0px" width="25.0" height="25.0" viewBox="0 0 24 24" preserveAspectRatio="none"><path d="M3 13v9M10 13l4 3-4 3M22 13l-4 3 4 3M10 9l9-7M12 12l9-7" fill="none" stroke="#c81010" stroke-width="3"/><path d="M3 13v9M10 13l4 3-4 3M22 13l-4 3 4 3M10 9l9-7M12 12l9-7" fill="none" stroke="#7ad82a" stroke-width="1.6"/><path d="M4 1l5 0-2 4 3 0-7 7 2-5-3 0z" fill="#2a7ae0" stroke="#0a2a60" stroke-width="0.6"/><path d="M8 10l6 6" stroke="#222" stroke-width="1.4"/></svg>
<svg class="a" style="left:278.0px;top:90.0px" width="25.0" height="25.0" viewBox="0 0 24 24" preserveAspectRatio="none"><ellipse cx="12" cy="12" rx="11" ry="7" transform="rotate(-35 12 12)" fill="none" stroke="#aaa" stroke-width="1.6"/><ellipse cx="12" cy="12" rx="8" ry="4.5" transform="rotate(-35 12 12)" fill="none" stroke="#bbb" stroke-width="1.2"/><path d="M6 18L18 6M8 9l8 6" stroke="#aaa" stroke-width="1.8"/></svg>
<svg class="a" style="left:314.0px;top:88.5px" width="28.0" height="28.0" viewBox="0 0 24 24" preserveAspectRatio="none"><path d="M5 5Q2 12 5 19M19 5Q22 12 19 19M12 8v8" fill="none" stroke="#bbb" stroke-width="2.4"/><circle cx="5" cy="4.5" r="3.6" fill="#bdbdbd" stroke="#999" stroke-width="0.6"/><circle cx="5" cy="19.5" r="3.6" fill="#bdbdbd" stroke="#999" stroke-width="0.6"/><circle cx="19" cy="4.5" r="3.6" fill="#bdbdbd" stroke="#999" stroke-width="0.6"/><circle cx="19" cy="19.5" r="3.6" fill="#bdbdbd" stroke="#999" stroke-width="0.6"/><circle cx="12" cy="8" r="2.2" fill="#bdbdbd" stroke="#999" stroke-width="0.6"/><circle cx="12" cy="16" r="2.2" fill="#bdbdbd" stroke="#999" stroke-width="0.6"/></svg>
<svg class="a" style="left:351.6px;top:88.5px" width="28.1" height="28.1" viewBox="0 0 24 24" preserveAspectRatio="none"><path d="M1 3h6M1 7h6" stroke="#aaa" stroke-width="2"/><path d="M11 5Q8 12 11 19M18 5Q15 12 18 19" fill="none" stroke="#bbb" stroke-width="2.4"/><circle cx="11" cy="4.5" r="3.6" fill="#bdbdbd" stroke="#999" stroke-width="0.6"/><circle cx="11" cy="19.5" r="3.6" fill="#bdbdbd" stroke="#999" stroke-width="0.6"/><circle cx="18" cy="4.5" r="3.6" fill="#bdbdbd" stroke="#999" stroke-width="0.6"/><circle cx="18" cy="19.5" r="3.6" fill="#bdbdbd" stroke="#999" stroke-width="0.6"/></svg>
<svg class="a" style="left:387.5px;top:100.9px" width="7.8" height="4.3" viewBox="0 0 10 5.5"><path d="M0 0H10L5 5.5z" fill="#777"/></svg>
<svg class="a" style="left:403.0px;top:88.5px" width="28.0" height="28.0" viewBox="0 0 24 24" preserveAspectRatio="none"><path d="M3 14v8M9 11v7M15 8v7M21 4v7" stroke="#aaa" stroke-width="2.4"/><circle cx="3" cy="14" r="2.2" fill="#bdbdbd" stroke="#999" stroke-width="0.6"/><circle cx="3" cy="22" r="2.2" fill="#bdbdbd" stroke="#999" stroke-width="0.6"/><circle cx="9" cy="11" r="2.2" fill="#bdbdbd" stroke="#999" stroke-width="0.6"/><circle cx="9" cy="18" r="2.2" fill="#bdbdbd" stroke="#999" stroke-width="0.6"/><circle cx="15" cy="8" r="2.2" fill="#bdbdbd" stroke="#999" stroke-width="0.6"/><circle cx="15" cy="15" r="2.2" fill="#bdbdbd" stroke="#999" stroke-width="0.6"/><circle cx="21" cy="3" r="2.2" fill="#bdbdbd" stroke="#999" stroke-width="0.6"/><circle cx="21" cy="11" r="2.2" fill="#bdbdbd" stroke="#999" stroke-width="0.6"/></svg>
<svg class="a" style="left:439.0px;top:87.6px" width="29.8" height="29.8" viewBox="0 0 24 24" preserveAspectRatio="none"><path d="M2 2l11 11M13 2L2 13" stroke="#dd1111" stroke-width="3.2"/><path d="M12 16v6M16 17l3 2-3 2M23 17l-3 2 3 2M16 14l6-5M17 16l6-5" fill="none" stroke="#3a9a1a" stroke-width="2"/></svg>
<svg class="a" style="left:493.0px;top:89.4px" width="26.2" height="26.2" viewBox="0 0 24 24" preserveAspectRatio="none"><path d="M5 5l14-2 2 16-15 2z" fill="#e8e8e8" stroke="#5a9a1a" stroke-width="3"/><path d="M5 5l14-2 2 16-15 2z" fill="none" stroke="#7ad82a" stroke-width="1.6"/><rect x="8" y="8" width="9" height="9" rx="2" transform="rotate(-30 12 12)" fill="none" stroke="#888" stroke-width="1.2"/><circle cx="5" cy="5" r="3.3" fill="#e01818" stroke="#5c0000" stroke-width="0.6"/><circle cx="19" cy="3" r="3.3" fill="#e01818" stroke="#5c0000" stroke-width="0.6"/><circle cx="21" cy="19" r="3.3" fill="#e01818" stroke="#5c0000" stroke-width="0.6"/><circle cx="6" cy="21" r="3.3" fill="#e01818" stroke="#5c0000" stroke-width="0.6"/></svg>
<svg class="a" style="left:527.7px;top:100.4px" width="9.3" height="5.1" viewBox="0 0 10 5.5"><path d="M0 0H10L5 5.5z" fill="#111"/></svg>
<svg class="a" style="left:543.8px;top:88.9px" width="27.1" height="27.1" viewBox="0 0 24 24" preserveAspectRatio="none"><circle cx="12" cy="12" r="9" fill="none" stroke="#c8c8c8" stroke-width="2" stroke-dasharray="3 3"/><circle cx="12" cy="3" r="2.5" fill="#aaa" stroke="#999" stroke-width="0.6"/><circle cx="18" cy="4" r="2.5" fill="#aaa" stroke="#999" stroke-width="0.6"/><circle cx="21" cy="10" r="2.5" fill="#aaa" stroke="#999" stroke-width="0.6"/><circle cx="20" cy="16" r="2.5" fill="#aaa" stroke="#999" stroke-width="0.6"/></svg>
<svg class="a" style="left:581.0px;top:88.5px" width="28.0" height="28.0" viewBox="0 0 24 24" preserveAspectRatio="none"><path d="M8 2v18M14 2v10M2 8h17M2 14h12" stroke="#8a8a8a" stroke-width="3.6"/><path d="M8 2v18M14 2v10M2 8h17M2 14h12" stroke="#bdbdbd" stroke-width="2.2"/><path d="M11 19Q17 18 20 11" fill="none" stroke="#aaa" stroke-width="1.6"/><circle cx="20" cy="10" r="2.2" fill="#999" stroke="#999" stroke-width="0.6"/><circle cx="11" cy="21" r="2.2" fill="#999" stroke="#999" stroke-width="0.6"/><circle cx="20" cy="20" r="2.2" fill="#999" stroke="#999" stroke-width="0.6"/></svg>
<svg class="a" style="left:618.3px;top:89.0px" width="27.0" height="27.0" viewBox="0 0 24 24" preserveAspectRatio="none"><path d="M8 2v18M14 2v10M2 8h17M2 14h12" stroke="#8a8a8a" stroke-width="3.6"/><path d="M8 2v18M14 2v10M2 8h17M2 14h12" stroke="#bdbdbd" stroke-width="2.2"/><path d="M11 19Q17 18 20 11" fill="none" stroke="#aaa" stroke-width="1.6"/><circle cx="20" cy="10" r="2.2" fill="#999" stroke="#999" stroke-width="0.6"/><circle cx="11" cy="21" r="2.2" fill="#999" stroke="#999" stroke-width="0.6"/><circle cx="20" cy="20" r="2.2" fill="#999" stroke="#999" stroke-width="0.6"/></svg>
<svg class="a" style="left:655.5px;top:88.9px" width="27.1" height="27.1" viewBox="0 0 24 24" preserveAspectRatio="none"><path d="M8 9v12M14 4v14M4 14h15M9 7h9" stroke="#3a8a1a" stroke-width="3"/><path d="M8 9v12M14 4v14M4 14h15M9 7h9" stroke="#7ad82a" stroke-width="1.6"/><path d="M5 2h4v4h4v4H9v4H5v-4H1V6h4z" fill="#4a86d0" stroke="#1a3a80" stroke-width="0.7"/><circle cx="20" cy="9" r="2.4" fill="#e01818" stroke="#5c0000" stroke-width="0.6"/><circle cx="13" cy="21" r="2.4" fill="#e01818" stroke="#5c0000" stroke-width="0.6"/><circle cx="21" cy="19" r="2.4" fill="#e01818" stroke="#5c0000" stroke-width="0.6"/></svg>
<svg class="a" style="left:691.0px;top:100.4px" width="9.4" height="5.2" viewBox="0 0 10 5.5"><path d="M0 0H10L5 5.5z" fill="#111"/></svg>
</div>
<div id="view" class="a"></div>
<svg width="1536" height="815" style="position:absolute;left:0;top:0"><line x1="467" y1="185.5" x2="1448.6" y2="185.5" stroke="#cfcfd6" stroke-opacity="0.5" stroke-width="1.2" stroke-dasharray="3.2 3.2"/><line x1="467" y1="217.5" x2="1448.6" y2="217.5" stroke="#cfcfd6" stroke-opacity="0.5" stroke-width="1.2" stroke-dasharray="3.2 3.2"/><line x1="467" y1="249.5" x2="1448.6" y2="249.5" stroke="#cfcfd6" stroke-opacity="0.5" stroke-width="1.2" stroke-dasharray="3.2 3.2"/><line x1="467" y1="280.5" x2="1448.6" y2="280.5" stroke="#cfcfd6" stroke-opacity="0.5" stroke-width="1.2" stroke-dasharray="3.2 3.2"/><line x1="467" y1="312.5" x2="1448.6" y2="312.5" stroke="#cfcfd6" stroke-opacity="0.5" stroke-width="1.2" stroke-dasharray="3.2 3.2"/><line x1="467" y1="343.5" x2="1448.6" y2="343.5" stroke="#cfcfd6" stroke-opacity="0.5" stroke-width="1.2" stroke-dasharray="3.2 3.2"/><line x1="467" y1="375.5" x2="1448.6" y2="375.5" stroke="#cfcfd6" stroke-opacity="0.5" stroke-width="1.2" stroke-dasharray="3.2 3.2"/><line x1="467" y1="407.5" x2="1448.6" y2="407.5" stroke="#cfcfd6" stroke-opacity="0.5" stroke-width="1.2" stroke-dasharray="3.2 3.2"/><line x1="467" y1="438.5" x2="1448.6" y2="438.5" stroke="#cfcfd6" stroke-opacity="0.5" stroke-width="1.2" stroke-dasharray="3.2 3.2"/><line x1="467" y1="470.5" x2="1448.6" y2="470.5" stroke="#cfcfd6" stroke-opacity="0.5" stroke-width="1.2" stroke-dasharray="3.2 3.2"/><line x1="467" y1="502.5" x2="1448.6" y2="502.5" stroke="#cfcfd6" stroke-opacity="0.5" stroke-width="1.2" stroke-dasharray="3.2 3.2"/><line x1="467" y1="533.5" x2="1448.6" y2="533.5" stroke="#cfcfd6" stroke-opacity="0.5" stroke-width="1.2" stroke-dasharray="3.2 3.2"/><line x1="467" y1="565.5" x2="1448.6" y2="565.5" stroke="#cfcfd6" stroke-opacity="0.5" stroke-width="1.2" stroke-dasharray="3.2 3.2"/><line x1="467" y1="596.5" x2="1448.6" y2="596.5" stroke="#cfcfd6" stroke-opacity="0.5" stroke-width="1.2" stroke-dasharray="3.2 3.2"/><line x1="467" y1="628.5" x2="1448.6" y2="628.5" stroke="#cfcfd6" stroke-opacity="0.5" stroke-width="1.2" stroke-dasharray="3.2 3.2"/><line x1="467" y1="660.5" x2="1448.6" y2="660.5" stroke="#cfcfd6" stroke-opacity="0.5" stroke-width="1.2" stroke-dasharray="3.2 3.2"/><line x1="467" y1="691.5" x2="1448.6" y2="691.5" stroke="#cfcfd6" stroke-opacity="0.5" stroke-width="1.2" stroke-dasharray="3.2 3.2"/><line x1="467" y1="723.5" x2="1448.6" y2="723.5" stroke="#cfcfd6" stroke-opacity="0.5" stroke-width="1.2" stroke-dasharray="3.2 3.2"/><line x1="483.5" y1="176" x2="483.5" y2="752" stroke="#cfcfd6" stroke-opacity="0.5" stroke-width="1.2" stroke-dasharray="3.2 3.2"/><line x1="515.5" y1="176" x2="515.5" y2="752" stroke="#cfcfd6" stroke-opacity="0.5" stroke-width="1.2" stroke-dasharray="3.2 3.2"/><line x1="546.5" y1="176" x2="546.5" y2="752" stroke="#cfcfd6" stroke-opacity="0.5" stroke-width="1.2" stroke-dasharray="3.2 3.2"/><line x1="578.5" y1="176" x2="578.5" y2="752" stroke="#cfcfd6" stroke-opacity="0.5" stroke-width="1.2" stroke-dasharray="3.2 3.2"/><line x1="609.5" y1="176" x2="609.5" y2="752" stroke="#cfcfd6" stroke-opacity="0.5" stroke-width="1.2" stroke-dasharray="3.2 3.2"/><line x1="641.5" y1="176" x2="641.5" y2="752" stroke="#cfcfd6" stroke-opacity="0.5" stroke-width="1.2" stroke-dasharray="3.2 3.2"/><line x1="673.5" y1="176" x2="673.5" y2="752" stroke="#cfcfd6" stroke-opacity="0.5" stroke-width="1.2" stroke-dasharray="3.2 3.2"/><line x1="704.5" y1="176" x2="704.5" y2="752" stroke="#cfcfd6" stroke-opacity="0.5" stroke-width="1.2" stroke-dasharray="3.2 3.2"/><line x1="736.5" y1="176" x2="736.5" y2="752" stroke="#cfcfd6" stroke-opacity="0.5" stroke-width="1.2" stroke-dasharray="3.2 3.2"/><line x1="768.5" y1="176" x2="768.5" y2="752" stroke="#cfcfd6" stroke-opacity="0.5" stroke-width="1.2" stroke-dasharray="3.2 3.2"/><line x1="799.5" y1="176" x2="799.5" y2="752" stroke="#cfcfd6" stroke-opacity="0.5" stroke-width="1.2" stroke-dasharray="3.2 3.2"/><line x1="831.5" y1="176" x2="831.5" y2="752" stroke="#cfcfd6" stroke-opacity="0.5" stroke-width="1.2" stroke-dasharray="3.2 3.2"/><line x1="862.5" y1="176" x2="862.5" y2="752" stroke="#cfcfd6" stroke-opacity="0.5" stroke-width="1.2" stroke-dasharray="3.2 3.2"/><line x1="894.5" y1="176" x2="894.5" y2="752" stroke="#cfcfd6" stroke-opacity="0.5" stroke-width="1.2" stroke-dasharray="3.2 3.2"/><line x1="926.5" y1="176" x2="926.5" y2="752" stroke="#cfcfd6" stroke-opacity="0.5" stroke-width="1.2" stroke-dasharray="3.2 3.2"/><line x1="957.5" y1="176" x2="957.5" y2="752" stroke="#cfcfd6" stroke-opacity="0.5" stroke-width="1.2" stroke-dasharray="3.2 3.2"/><line x1="989.5" y1="176" x2="989.5" y2="752" stroke="#cfcfd6" stroke-opacity="0.5" stroke-width="1.2" stroke-dasharray="3.2 3.2"/><line x1="1021.5" y1="176" x2="1021.5" y2="752" stroke="#cfcfd6" stroke-opacity="0.5" stroke-width="1.2" stroke-dasharray="3.2 3.2"/><line x1="1052.5" y1="176" x2="1052.5" y2="752" stroke="#cfcfd6" stroke-opacity="0.5" stroke-width="1.2" stroke-dasharray="3.2 3.2"/><line x1="1084.5" y1="176" x2="1084.5" y2="752" stroke="#cfcfd6" stroke-opacity="0.5" stroke-width="1.2" stroke-dasharray="3.2 3.2"/><line x1="1115.5" y1="176" x2="1115.5" y2="752" stroke="#cfcfd6" stroke-opacity="0.5" stroke-width="1.2" stroke-dasharray="3.2 3.2"/><line x1="1147.5" y1="176" x2="1147.5" y2="752" stroke="#cfcfd6" stroke-opacity="0.5" stroke-width="1.2" stroke-dasharray="3.2 3.2"/><line x1="1179.5" y1="176" x2="1179.5" y2="752" stroke="#cfcfd6" stroke-opacity="0.5" stroke-width="1.2" stroke-dasharray="3.2 3.2"/><line x1="1210.5" y1="176" x2="1210.5" y2="752" stroke="#cfcfd6" stroke-opacity="0.5" stroke-width="1.2" stroke-dasharray="3.2 3.2"/><line x1="1242.5" y1="176" x2="1242.5" y2="752" stroke="#cfcfd6" stroke-opacity="0.5" stroke-width="1.2" stroke-dasharray="3.2 3.2"/><line x1="1274.5" y1="176" x2="1274.5" y2="752" stroke="#cfcfd6" stroke-opacity="0.5" stroke-width="1.2" stroke-dasharray="3.2 3.2"/><line x1="1305.5" y1="176" x2="1305.5" y2="752" stroke="#cfcfd6" stroke-opacity="0.5" stroke-width="1.2" stroke-dasharray="3.2 3.2"/><line x1="1337.5" y1="176" x2="1337.5" y2="752" stroke="#cfcfd6" stroke-opacity="0.5" stroke-width="1.2" stroke-dasharray="3.2 3.2"/><line x1="1368.5" y1="176" x2="1368.5" y2="752" stroke="#cfcfd6" stroke-opacity="0.5" stroke-width="1.2" stroke-dasharray="3.2 3.2"/><line x1="1400.5" y1="176" x2="1400.5" y2="752" stroke="#cfcfd6" stroke-opacity="0.5" stroke-width="1.2" stroke-dasharray="3.2 3.2"/><line x1="1432.5" y1="176" x2="1432.5" y2="752" stroke="#cfcfd6" stroke-opacity="0.5" stroke-width="1.2" stroke-dasharray="3.2 3.2"/><line x1="488" y1="596.3" x2="1448" y2="596.3" stroke="#d86262" stroke-width="1.8" stroke-dasharray="3.2 3.2"/><line x1="957.8" y1="176" x2="957.8" y2="752" stroke="#80e080" stroke-width="2"/><line x1="593.8" y1="455.9" x2="637.4" y2="617.5" stroke="#82d896" stroke-width="2.2" /><line x1="637.4" y1="617.5" x2="726.4" y2="672.0" stroke="#82d896" stroke-width="2.2" /><line x1="726.4" y1="672.0" x2="1024.5" y2="672.0" stroke="#82d896" stroke-width="2.2" /><line x1="1024.5" y1="672.0" x2="1112.8" y2="583.5" stroke="#82d896" stroke-width="2.2" /><line x1="1112.8" y1="583.5" x2="1220.8" y2="554.3" stroke="#82d896" stroke-width="2.2" /><line x1="1220.8" y1="554.3" x2="1266.8" y2="379.4" stroke="#82d896" stroke-width="2.2" /><line x1="1266.8" y1="379.4" x2="1029.3" y2="242.1" stroke="#82d896" stroke-width="2.2" /><line x1="1029.3" y1="242.1" x2="892.6" y2="378.6" stroke="#82d896" stroke-width="2.2" /><line x1="892.6" y1="378.6" x2="853.3" y2="525.3" stroke="#82d896" stroke-width="2.2" /><line x1="853.3" y1="525.3" x2="593.8" y2="455.9" stroke="#82d896" stroke-width="2.2" /><circle cx="726.4" cy="596.4" r="24.3" fill="none" stroke="#82d896" stroke-width="2.2"/><circle cx="957.8" cy="596.3" r="27.5" fill="none" stroke="#82d896" stroke-width="2.2"/><line x1="853.3" y1="525.3" x2="866.3" y2="477.0" stroke="#ff2a10" stroke-width="2" /><line x1="853.3" y1="525.3" x2="805.0" y2="512.4" stroke="#ff2a10" stroke-width="2" /><line x1="726.4" y1="672.0" x2="777.2" y2="672.0" stroke="#ff2a10" stroke-width="2" /><line x1="726.4" y1="672.0" x2="777.2" y2="596.4" stroke="#ff2a10" stroke-width="0" /><line x1="957.8" y1="596.3" x2="1139.0" y2="414.7" stroke="#8ca8ff" stroke-width="2" /><path d="M1114,397.7 A30.4,30.4 0 0 1 1163.6,432.7" fill="none" stroke="#ffffff" stroke-width="2.4"/><path d="M1120,494.3 A30.4,30.4 0 0 1 1070.4,459.3" fill="none" stroke="#ffffff" stroke-width="2.4"/><line x1="1114.0" y1="397.7" x2="1070.4" y2="459.3" stroke="#ff2a10" stroke-width="2.2" /><line x1="1163.6" y1="432.7" x2="1120.0" y2="494.3" stroke="#ff2a10" stroke-width="2.2" /><line x1="1139.1" y1="414.7" x2="1122.6" y2="476.6" stroke="#1a1aff" stroke-width="3" /><circle cx="1095.6" cy="477.4" r="3" fill="#ff2a10"/><circle cx="1122.1" cy="476.6" r="3" fill="#ff2a10"/><circle cx="1139" cy="414.7" r="3" fill="#ff2a10"/><circle cx="1114" cy="397.7" r="3" fill="#ff2a10"/><circle cx="1070.4" cy="459.3" r="3" fill="#ff2a10"/><circle cx="1163.6" cy="432.7" r="3" fill="#ff2a10"/><circle cx="1120" cy="494.3" r="3" fill="#ff2a10"/><line x1="593.8" y1="455.9" x2="606.6" y2="407.1" stroke="#ff2a10" stroke-width="2" /><line x1="604.0" y1="423.0" x2="695.2" y2="447.3" stroke="#ff2a10" stroke-width="2" /><line x1="748.3" y1="461.4" x2="861.7" y2="491.6" stroke="#ff2a10" stroke-width="2" /><polygon points="604.0,423.0 615.7,422.0 613.6,429.7" fill="#ff2a10"/><polygon points="861.7,491.6 850.0,492.6 852.1,484.9" fill="#ff2a10"/><text x="721.4" y="455.6" transform="rotate(15 721.4 455.6)" text-anchor="middle" dominant-baseline="central" font-family="Liberation Sans" font-size="14.3" fill="#b0342c" stroke="#b0342c" stroke-width="0.3">85 mm</text><line x1="593.8" y1="455.9" x2="542.8" y2="470.0" stroke="#ff2a10" stroke-width="2" /><line x1="637.4" y1="617.5" x2="585.8" y2="632.0" stroke="#ff2a10" stroke-width="2" /><line x1="559.3" y1="469.3" x2="569.3" y2="506.8" stroke="#ff2a10" stroke-width="2" /><line x1="583.4" y1="560.0" x2="600.8" y2="625.6" stroke="#ff2a10" stroke-width="2" /><polygon points="559.3,469.3 566.0,478.9 558.3,481.0" fill="#ff2a10"/><polygon points="600.8,625.6 594.1,616.0 601.8,613.9" fill="#ff2a10"/><text x="577.8" y="533.0" transform="rotate(-105 577.8 533.0)" text-anchor="middle" dominant-baseline="central" font-family="Liberation Sans" font-size="14.3" fill="#b0342c" stroke="#b0342c" stroke-width="0.3">53 mm</text><line x1="892.6" y1="378.6" x2="843.4" y2="365.3" stroke="#ff2a10" stroke-width="2" /><line x1="858.2" y1="371.9" x2="848.1" y2="411.0" stroke="#ff2a10" stroke-width="2" /><line x1="834.5" y1="464.3" x2="821.3" y2="515.5" stroke="#ff2a10" stroke-width="2" /><polygon points="858.2,371.9 859.3,383.5 851.6,381.6" fill="#ff2a10"/><polygon points="821.3,515.5 820.2,503.9 827.9,505.8" fill="#ff2a10"/><text x="843.4" y="438.2" transform="rotate(-75 843.4 438.2)" text-anchor="middle" dominant-baseline="central" font-family="Liberation Sans" font-size="14.3" fill="#b0342c" stroke="#b0342c" stroke-width="0.3">48 mm</text><line x1="892.6" y1="378.6" x2="858.5" y2="343.8" stroke="#ff2a10" stroke-width="2" /><line x1="1029.3" y1="242.1" x2="994.2" y2="207.0" stroke="#ff2a10" stroke-width="2" /><line x1="870.6" y1="354.0" x2="920.4" y2="304.3" stroke="#ff2a10" stroke-width="2" /><line x1="959.3" y1="265.4" x2="1004.2" y2="220.5" stroke="#ff2a10" stroke-width="2" /><polygon points="870.6,354.0 875.6,343.4 881.2,349.1" fill="#ff2a10"/><polygon points="1004.2,220.5 999.2,231.1 993.6,225.4" fill="#ff2a10"/><text x="940.8" y="285.8" transform="rotate(-45 940.8 285.8)" text-anchor="middle" dominant-baseline="central" font-family="Liberation Sans" font-size="14.3" fill="#b0342c" stroke="#b0342c" stroke-width="0.3">61 mm</text><line x1="1029.3" y1="242.1" x2="1056.8" y2="194.0" stroke="#ff2a10" stroke-width="2" /><line x1="1266.8" y1="379.4" x2="1295.2" y2="331.8" stroke="#ff2a10" stroke-width="2" /><line x1="1050.3" y1="209.3" x2="1153.2" y2="268.3" stroke="#ff2a10" stroke-width="2" /><line x1="1200.9" y1="295.7" x2="1286.1" y2="344.6" stroke="#ff2a10" stroke-width="2" /><polygon points="1050.3,209.3 1061.8,211.3 1057.9,218.2" fill="#ff2a10"/><polygon points="1286.1,344.6 1274.6,342.6 1278.5,335.7" fill="#ff2a10"/><text x="1176.6" y="282.8" transform="rotate(30 1176.6 282.8)" text-anchor="middle" dominant-baseline="central" font-family="Liberation Sans" font-size="14.3" fill="#b0342c" stroke="#b0342c" stroke-width="0.3">87 mm</text><line x1="1266.8" y1="379.4" x2="1317.0" y2="393.6" stroke="#ff2a10" stroke-width="2" /><line x1="1220.8" y1="554.3" x2="1270.0" y2="567.6" stroke="#ff2a10" stroke-width="2" /><line x1="1299.4" y1="390.9" x2="1283.9" y2="451.4" stroke="#ff2a10" stroke-width="2" /><line x1="1270.2" y1="504.7" x2="1255.2" y2="563.2" stroke="#ff2a10" stroke-width="2" /><polygon points="1299.4,390.9 1300.5,402.5 1292.8,400.6" fill="#ff2a10"/><polygon points="1255.2,563.2 1254.1,551.6 1261.8,553.5" fill="#ff2a10"/><text x="1277.0" y="478.0" transform="rotate(-75 1277.0 478.0)" text-anchor="middle" dominant-baseline="central" font-family="Liberation Sans" font-size="14.3" fill="#b0342c" stroke="#b0342c" stroke-width="0.3">57 mm</text><line x1="1112.8" y1="583.5" x2="1103.4" y2="543.8" stroke="#ff2a10" stroke-width="2" /><line x1="1220.8" y1="554.3" x2="1210.2" y2="515.0" stroke="#ff2a10" stroke-width="2" /><line x1="1107.4" y1="559.2" x2="1121.0" y2="555.7" stroke="#ff2a10" stroke-width="2" /><line x1="1174.3" y1="542.0" x2="1212.7" y2="532.2" stroke="#ff2a10" stroke-width="2" /><polygon points="1107.4,559.2 1117.1,552.6 1119.0,560.3" fill="#ff2a10"/><polygon points="1212.7,532.2 1203.0,538.8 1201.1,531.1" fill="#ff2a10"/><text x="1148.0" y="550.2" transform="rotate(-15 1148.0 550.2)" text-anchor="middle" dominant-baseline="central" font-family="Liberation Sans" font-size="14.3" fill="#b0342c" stroke="#b0342c" stroke-width="0.3">35 mm</text><line x1="1024.5" y1="672.0" x2="1058.8" y2="706.3" stroke="#ff2a10" stroke-width="2" /><line x1="1112.8" y1="583.5" x2="1148.0" y2="617.2" stroke="#ff2a10" stroke-width="2" /><line x1="1048.0" y1="695.5" x2="1079.8" y2="663.7" stroke="#ff2a10" stroke-width="2" /><line x1="1118.7" y1="624.8" x2="1135.8" y2="607.8" stroke="#ff2a10" stroke-width="2" /><polygon points="1048.0,695.5 1053.0,684.9 1058.6,690.6" fill="#ff2a10"/><polygon points="1135.8,607.8 1130.8,618.4 1125.2,612.7" fill="#ff2a10"/><text x="1099.0" y="644.0" transform="rotate(-45 1099.0 644.0)" text-anchor="middle" dominant-baseline="central" font-family="Liberation Sans" font-size="14.3" fill="#b0342c" stroke="#b0342c" stroke-width="0.3">40 mm</text><line x1="726.4" y1="596.4" x2="726.4" y2="730.6" stroke="#ff2a10" stroke-width="2" /><line x1="958.0" y1="596.3" x2="958.0" y2="707.6" stroke="#ff2a10" stroke-width="2" /><line x1="1024.5" y1="672.0" x2="1024.5" y2="732.0" stroke="#ff2a10" stroke-width="2" /><line x1="726.4" y1="691.4" x2="803.7" y2="691.4" stroke="#ff2a10" stroke-width="2" /><line x1="858.7" y1="691.4" x2="958.0" y2="691.4" stroke="#ff2a10" stroke-width="2" /><polygon points="726.4,691.4 737.4,687.4 737.4,695.4" fill="#ff2a10"/><polygon points="958.0,691.4 947.0,695.4 947.0,687.4" fill="#ff2a10"/><text x="831.2" y="691.4" transform="rotate(0 831.2 691.4)" text-anchor="middle" dominant-baseline="central" font-family="Liberation Sans" font-size="14.3" fill="#b0342c" stroke="#b0342c" stroke-width="0.3">73 mm</text><line x1="726.4" y1="714.4" x2="803.7" y2="714.4" stroke="#ff2a10" stroke-width="2" /><line x1="858.7" y1="714.4" x2="1024.5" y2="714.4" stroke="#ff2a10" stroke-width="2" /><polygon points="726.4,714.4 737.4,710.4 737.4,718.4" fill="#ff2a10"/><polygon points="1024.5,714.4 1013.5,718.4 1013.5,710.4" fill="#ff2a10"/><text x="831.2" y="714.4" transform="rotate(0 831.2 714.4)" text-anchor="middle" dominant-baseline="central" font-family="Liberation Sans" font-size="14.3" fill="#b0342c" stroke="#b0342c" stroke-width="0.3">94 mm</text><line x1="726.4" y1="596.4" x2="777.2" y2="596.4" stroke="#ff2a10" stroke-width="2" /><line x1="761.0" y1="596.4" x2="761.0" y2="614.0" stroke="#ff2a10" stroke-width="2" /><line x1="761.0" y1="658.0" x2="761.0" y2="672.0" stroke="#ff2a10" stroke-width="2" /><polygon points="761.0,596.4 765.0,607.4 757.0,607.4" fill="#ff2a10"/><polygon points="761.0,672.0 757.0,661.0 765.0,661.0" fill="#ff2a10"/><text x="762.3" y="636.0" transform="rotate(-90 762.3 636.0)" text-anchor="middle" dominant-baseline="central" font-family="Liberation Sans" font-size="14.3" fill="#b0342c" stroke="#b0342c" stroke-width="0.3">24 mm</text><line x1="709.7" y1="610.4" x2="744.8" y2="582.1" stroke="#ff2a10" stroke-width="2" /><polygon points="709.7,610.4 715.8,600.4 720.8,606.6" fill="#ff2a10"/><polygon points="744.8,582.1 738.7,592.1 733.7,585.9" fill="#ff2a10"/><text x="767.7" y="563.9" transform="rotate(-37 767.7 563.9)" text-anchor="middle" dominant-baseline="central" font-family="Liberation Sans" font-size="14.3" fill="#b0342c" stroke="#b0342c" stroke-width="0.3">⌀15 mm</text><line x1="921.4" y1="578.0" x2="981.7" y2="608.5" stroke="#ff2a10" stroke-width="2" /><polygon points="921.4,578.0 933.0,579.4 929.4,586.5" fill="#ff2a10"/><polygon points="981.7,608.5 970.1,607.1 973.7,600.0" fill="#ff2a10"/><text x="893.3" y="567.2" transform="rotate(28 893.3 567.2)" text-anchor="middle" dominant-baseline="central" font-family="Liberation Sans" font-size="14.3" fill="#b0342c" stroke="#b0342c" stroke-width="0.3">⌀17 mm</text><line x1="957.8" y1="596.3" x2="904.4" y2="542.2" stroke="#ff2a10" stroke-width="2" /><line x1="1139.0" y1="414.7" x2="1085.0" y2="361.0" stroke="#ff2a10" stroke-width="2" /><line x1="919.0" y1="551.0" x2="1003.1" y2="467.0" stroke="#ff2a10" stroke-width="2" /><line x1="1042.1" y1="428.2" x2="1096.0" y2="374.3" stroke="#ff2a10" stroke-width="2" /><polygon points="919.0,551.0 924.0,540.4 929.6,546.1" fill="#ff2a10"/><polygon points="1096.0,374.3 1091.0,384.9 1085.4,379.2" fill="#ff2a10"/><text x="1023.0" y="448.0" transform="rotate(-45 1023.0 448.0)" text-anchor="middle" dominant-baseline="central" font-family="Liberation Sans" font-size="14.3" fill="#b0342c" stroke="#b0342c" stroke-width="0.3">81 mm</text><line x1="1163.6" y1="432.7" x2="1197.6" y2="456.0" stroke="#ff2a10" stroke-width="2" /><line x1="1120.0" y1="494.3" x2="1154.6" y2="518.5" stroke="#ff2a10" stroke-width="2" /><line x1="1182.0" y1="450.5" x2="1177.7" y2="456.4" stroke="#ff2a10" stroke-width="2" /><line x1="1145.7" y1="501.2" x2="1142.5" y2="505.7" stroke="#ff2a10" stroke-width="2" /><polygon points="1182.0,450.5 1178.9,461.8 1172.3,457.1" fill="#ff2a10"/><polygon points="1142.5,505.7 1145.6,494.4 1152.2,499.1" fill="#ff2a10"/><text x="1162.0" y="479.0" transform="rotate(-54 1162.0 479.0)" text-anchor="middle" dominant-baseline="central" font-family="Liberation Sans" font-size="14.3" fill="#b0342c" stroke="#b0342c" stroke-width="0.3">24 mm</text><text x="1128.6" y="438.9" transform="rotate(35 1128.6 438.9)" text-anchor="middle" dominant-baseline="central" font-family="Liberation Sans" font-size="14.3" fill="#b0342c" stroke="#b0342c" stroke-width="0.3">10 mm</text><polygon points="1105.0,420.7 1116.3,423.8 1111.7,430.3" fill="#ff2a10"/><polygon points="1144.7,449.4 1133.5,446.1 1138.3,439.6" fill="#ff2a10"/><text x="1111.5" y="458.0" transform="rotate(0 1111.5 458.0)" text-anchor="middle" dominant-baseline="central" font-family="Liberation Sans" font-size="14.3" fill="#b0342c" stroke="#b0342c" stroke-width="0.3">30 °</text><text x="1161" y="376" font-family="Liberation Sans" font-weight="bold" font-size="11" fill="#c03028">=<tspan font-size="8" dy="1">40</tspan></text><text x="1057" y="525" font-family="Liberation Sans" font-weight="bold" font-size="11" fill="#c03028">=<tspan font-size="8" dy="1">40</tspan></text><line x1="664.3" y1="474.8" x2="672.0" y2="476.9" stroke="#ff2a10" stroke-width="1.6"/><line x1="612.8" y1="526.4" x2="614.9" y2="534.1" stroke="#ff2a10" stroke-width="1.6"/><polyline points="668.2,475.8 667.9,476.8 667.6,477.8 667.3,478.7 667.0,479.7 666.7,480.6 666.4,481.6 666.0,482.5 665.7,483.5 665.3,484.4 664.9,485.4 664.6,486.3 664.2,487.2 663.7,488.1 663.3,489.0 662.9,489.9 662.4,490.8 662.0,491.7 661.5,492.6 661.0,493.5 660.5,494.4 660.0,495.2 659.5,496.1 658.9,497.0 658.4,497.8 657.8,498.6 657.3,499.5 656.7,500.3 656.1,501.1 655.5,501.9 654.9,502.7 654.3,503.5" fill="none" stroke="#ff2a10" stroke-width="1.9"/><polyline points="639.1,518.1 638.3,518.7 637.5,519.3 636.7,519.9 635.8,520.4 635.0,521.0 634.1,521.5 633.3,522.0 632.4,522.5 631.5,523.0 630.6,523.5 629.7,524.0 628.9,524.5 628.0,524.9 627.0,525.4 626.1,525.8 625.2,526.2 624.3,526.6 623.4,527.0 622.4,527.4 621.5,527.7 620.6,528.1 619.6,528.4 618.7,528.8 617.7,529.1 616.8,529.4 615.8,529.7 614.8,530.0 613.9,530.2" fill="none" stroke="#ff2a10" stroke-width="1.9"/><text x="646.4" y="510.8" transform="rotate(0 646.4 510.8)" text-anchor="middle" dominant-baseline="central" font-family="Liberation Sans" font-size="14.3" fill="#b0342c" stroke="#b0342c" stroke-width="0.3">60 °</text><line x1="782.8" y1="506.4" x2="775.1" y2="504.3" stroke="#ff2a10" stroke-width="1.6"/><line x1="872.2" y1="454.8" x2="874.3" y2="447.1" stroke="#ff2a10" stroke-width="1.6"/><polyline points="778.9,505.4 779.3,503.9 779.8,502.5 780.2,501.0 780.7,499.6 781.2,498.2 781.8,496.8 782.4,495.4 783.0,494.0 783.6,492.6 784.2,491.2 784.9,489.9 785.6,488.6 786.4,487.2 787.1,485.9 787.9,484.6 788.7,483.4 789.6,482.1 790.4,480.9 791.3,479.6 792.2,478.4 793.1,477.2 794.1,476.1 795.1,474.9 796.1,473.8 797.1,472.7 798.1,471.6 799.2,470.5 800.3,469.4 801.4,468.4 802.5,467.4 803.7,466.4" fill="none" stroke="#ff2a10" stroke-width="1.9"/><polyline points="830.0,451.9 831.4,451.5 832.9,451.1 834.3,450.7 835.8,450.3 837.3,450.0 838.8,449.7 840.3,449.4 841.8,449.2 843.2,449.0 844.8,448.8 846.3,448.6 847.8,448.5 849.3,448.4 850.8,448.3 852.3,448.3 853.8,448.3 855.3,448.3 856.8,448.4 858.3,448.5 859.8,448.6 861.3,448.7 862.9,448.9 864.3,449.1 865.8,449.3 867.3,449.6 868.8,449.9 870.3,450.2 871.8,450.5 873.2,450.9" fill="none" stroke="#ff2a10" stroke-width="1.9"/><text x="814.6" y="459.0" transform="rotate(0 814.6 459.0)" text-anchor="middle" dominant-baseline="central" font-family="Liberation Sans" font-size="14.3" fill="#b0342c" stroke="#b0342c" stroke-width="0.3">90 °</text><line x1="873.7" y1="449.1" x2="871.6" y2="456.8" stroke="#ff2a10" stroke-width="1.6"/><line x1="944.2" y1="327.0" x2="949.9" y2="321.3" stroke="#ff2a10" stroke-width="1.6"/><polyline points="872.7,453.0 875.1,453.6 877.6,454.1 880.1,454.6 882.5,454.9 885.1,455.2 887.6,455.4 890.1,455.6 892.6,455.6 895.1,455.6 897.6,455.4 900.1,455.2 902.7,454.9 905.1,454.6 907.6,454.1 910.1,453.6 912.5,453.0 915.0,452.3 917.4,451.5 919.7,450.7 922.1,449.7 924.4,448.7 926.7,447.7 928.9,446.5 931.1,445.3 933.3,444.0 935.4,442.6 937.5,441.2 939.5,439.7 941.4,438.1 943.4,436.5 945.2,434.8 947.0,433.0 948.8,431.2 950.5,429.4 952.1,427.4 953.7,425.5" fill="none" stroke="#ff2a10" stroke-width="1.9"/><polyline points="962.7,410.4 963.7,408.1 964.7,405.7 965.5,403.4 966.3,401.0 967.0,398.5 967.6,396.1 968.1,393.6 968.6,391.1 968.9,388.7 969.2,386.1 969.4,383.6 969.6,381.1 969.6,378.6 969.6,376.1 969.4,373.6 969.2,371.1 968.9,368.5 968.6,366.1 968.1,363.6 967.6,361.1 967.0,358.7 966.3,356.2 965.5,353.8 964.7,351.5 963.7,349.1 962.7,346.8 961.7,344.5 960.5,342.3 959.3,340.1 958.0,337.9 956.6,335.8 955.2,333.7 953.7,331.7 952.1,329.8 950.5,327.8 948.8,326.0 947.0,324.2" fill="none" stroke="#ff2a10" stroke-width="1.9"/><text x="958.8" y="418.0" transform="rotate(0 958.8 418.0)" text-anchor="middle" dominant-baseline="central" font-family="Liberation Sans" font-size="14.3" fill="#b0342c" stroke="#b0342c" stroke-width="0.3">150 °</text><line x1="977.7" y1="293.7" x2="972.0" y2="299.4" stroke="#ff2a10" stroke-width="1.6"/><line x1="1092.5" y1="278.6" x2="1099.4" y2="282.6" stroke="#ff2a10" stroke-width="1.6"/><polyline points="974.9,296.5 976.1,297.8 977.4,299.0 978.7,300.2 980.1,301.3 981.4,302.4 982.8,303.5 984.2,304.5 985.7,305.6 987.2,306.5 988.6,307.5 990.1,308.4 991.7,309.3 993.2,310.1 994.8,310.9 996.4,311.7 998.0,312.4 999.6,313.1 1001.2,313.8 1002.9,314.4 1004.5,315.0 1006.2,315.6 1007.9,316.1 1009.6,316.5 1011.3,317.0 1013.0,317.4 1014.8,317.7 1016.5,318.0 1018.3,318.3 1020.0,318.5" fill="none" stroke="#ff2a10" stroke-width="1.9"/><polyline points="1058.1,313.5 1059.7,312.8 1061.3,312.1 1062.9,311.4 1064.5,310.6 1066.0,309.8 1067.6,308.9 1069.1,308.0 1070.6,307.1 1072.1,306.1 1073.5,305.1 1075.0,304.1 1076.4,303.0 1077.8,301.9 1079.1,300.8 1080.4,299.7 1081.8,298.5 1083.0,297.3 1084.3,296.0 1085.5,294.7 1086.7,293.4 1087.9,292.1 1089.0,290.8 1090.1,289.4 1091.1,288.0 1092.2,286.5 1093.2,285.1 1094.2,283.6 1095.1,282.1 1096.0,280.6" fill="none" stroke="#ff2a10" stroke-width="1.9"/><text x="1039.0" y="319.0" transform="rotate(0 1039.0 319.0)" text-anchor="middle" dominant-baseline="central" font-family="Liberation Sans" font-size="14.3" fill="#b0342c" stroke="#b0342c" stroke-width="0.3">105 °</text><line x1="1258.4" y1="411.3" x2="1256.4" y2="419.1" stroke="#ff2a10" stroke-width="1.6"/><line x1="1238.2" y1="362.9" x2="1231.3" y2="358.9" stroke="#ff2a10" stroke-width="1.6"/><polyline points="1257.4,415.2 1256.6,415.0 1255.8,414.7 1255.0,414.5 1254.2,414.2 1253.4,413.9 1252.6,413.6 1251.8,413.2 1251.0,412.9 1250.3,412.5 1249.5,412.1 1248.8,411.7 1248.0,411.3 1247.3,410.8 1246.6,410.4 1245.9,409.9 1245.2,409.4 1244.5,408.9 1243.8,408.4 1243.2,407.9 1242.5,407.3 1241.9,406.7 1241.3,406.2 1240.6,405.6 1240.1,405.0 1239.5,404.3 1238.9,403.7 1238.4,403.1 1237.8,402.4 1237.3,401.7" fill="none" stroke="#ff2a10" stroke-width="1.9"/><polyline points="1230.6,387.2 1230.5,386.3 1230.3,385.5 1230.2,384.7 1230.1,383.8 1230.0,383.0 1229.9,382.1 1229.8,381.3 1229.8,380.4 1229.8,379.6 1229.8,378.7 1229.8,377.9 1229.9,377.0 1229.9,376.2 1230.0,375.3 1230.1,374.5 1230.2,373.7 1230.4,372.8 1230.6,372.0 1230.7,371.1 1230.9,370.3 1231.1,369.5 1231.4,368.7 1231.6,367.9 1231.9,367.1 1232.2,366.3 1232.5,365.5 1232.8,364.7 1233.2,363.9 1233.6,363.2 1233.9,362.4 1234.3,361.6 1234.8,360.9" fill="none" stroke="#ff2a10" stroke-width="1.9"/><text x="1234.0" y="394.6" transform="rotate(0 1234.0 394.6)" text-anchor="middle" dominant-baseline="central" font-family="Liberation Sans" font-size="14.3" fill="#b0342c" stroke="#b0342c" stroke-width="0.3">105 °</text><line x1="1174.5" y1="566.8" x2="1166.7" y2="568.9" stroke="#ff2a10" stroke-width="1.6"/><line x1="1233.0" y1="507.9" x2="1235.0" y2="500.1" stroke="#ff2a10" stroke-width="1.6"/><polyline points="1170.6,567.8 1170.3,566.5 1170.0,565.2 1169.7,563.9 1169.5,562.5 1169.3,561.2 1169.1,559.8 1169.0,558.5 1168.9,557.1 1168.8,555.8 1168.8,554.4 1168.8,553.1 1168.9,551.7 1169.0,550.3 1169.1,549.0 1169.2,547.6 1169.4,546.3 1169.6,545.0 1169.9,543.6 1170.2,542.3 1170.5,541.0 1170.9,539.7 1171.3,538.4 1171.7,537.1 1172.2,535.8 1172.7,534.5 1173.2,533.3 1173.8,532.1 1174.4,530.8 1175.0,529.6 1175.7,528.4 1176.4,527.3 1177.1,526.1" fill="none" stroke="#ff2a10" stroke-width="1.9"/><polyline points="1191.2,511.6 1192.3,510.8 1193.5,510.1 1194.6,509.4 1195.8,508.7 1197.0,508.1 1198.2,507.5 1199.5,506.9 1200.7,506.3 1202.0,505.8 1203.2,505.4 1204.5,504.9 1205.8,504.5 1207.1,504.1 1208.4,503.8 1209.8,503.5 1211.1,503.2 1212.4,503.0 1213.8,502.8 1215.1,502.6 1216.5,502.5 1217.8,502.4 1219.2,502.3 1220.6,502.3 1221.9,502.3 1223.3,502.4 1224.6,502.4 1226.0,502.6 1227.3,502.7 1228.7,502.9 1230.0,503.1 1231.3,503.4 1232.7,503.7 1234.0,504.0" fill="none" stroke="#ff2a10" stroke-width="1.9"/><text x="1184.5" y="519.0" transform="rotate(0 1184.5 519.0)" text-anchor="middle" dominant-baseline="central" font-family="Liberation Sans" font-size="14.3" fill="#b0342c" stroke="#b0342c" stroke-width="0.3">120 °</text><line x1="1061.9" y1="634.4" x2="1056.2" y2="640.1" stroke="#ff2a10" stroke-width="1.6"/><line x1="1182.3" y1="564.9" x2="1190.1" y2="562.8" stroke="#ff2a10" stroke-width="1.6"/><polyline points="1059.1,637.2 1060.8,639.0 1062.7,640.6 1064.6,642.2 1066.5,643.8 1068.5,645.3 1070.6,646.7 1072.7,648.0 1074.8,649.3 1077.0,650.5 1079.2,651.7 1081.4,652.7 1083.7,653.7 1086.0,654.6 1088.4,655.5 1090.7,656.2 1093.1,656.9 1095.5,657.5 1098.0,658.0 1100.4,658.5 1102.9,658.8 1105.4,659.1 1107.8,659.3 1110.3,659.5 1112.8,659.5 1115.3,659.5 1117.8,659.3 1120.2,659.1 1122.7,658.8 1125.2,658.5 1127.6,658.0 1130.1,657.5 1132.5,656.9" fill="none" stroke="#ff2a10" stroke-width="1.9"/><polyline points="1161.0,642.2 1162.9,640.6 1164.8,639.0 1166.5,637.2 1168.3,635.5 1169.9,633.6 1171.5,631.7 1173.1,629.8 1174.6,627.8 1176.0,625.7 1177.3,623.6 1178.6,621.5 1179.8,619.3 1181.0,617.1 1182.0,614.9 1183.0,612.6 1183.9,610.3 1184.8,607.9 1185.5,605.6 1186.2,603.2 1186.8,600.8 1187.3,598.3 1187.8,595.9 1188.1,593.4 1188.4,590.9 1188.6,588.5 1188.8,586.0 1188.8,583.5 1188.8,581.0 1188.6,578.5 1188.4,576.1 1188.1,573.6 1187.8,571.1 1187.3,568.7 1186.8,566.2 1186.2,563.8" fill="none" stroke="#ff2a10" stroke-width="1.9"/><text x="1152.0" y="649.6" transform="rotate(0 1152.0 649.6)" text-anchor="middle" dominant-baseline="central" font-family="Liberation Sans" font-size="14.3" fill="#b0342c" stroke="#b0342c" stroke-width="0.3">150 °</text><line x1="980.5" y1="672.0" x2="972.5" y2="672.0" stroke="#ff2a10" stroke-width="1.6"/><line x1="1055.6" y1="640.9" x2="1061.3" y2="635.2" stroke="#ff2a10" stroke-width="1.6"/><polyline points="976.5,672.0 976.5,670.6 976.6,669.2 976.7,667.8 976.8,666.4 977.0,665.0 977.2,663.6 977.5,662.2 977.8,660.8 978.2,659.4 978.6,658.1 979.0,656.7 979.5,655.4 980.0,654.1 980.5,652.8 981.1,651.5 981.7,650.2 982.4,649.0 983.1,647.7 983.8,646.5 984.6,645.3 985.4,644.2 986.2,643.0 987.1,641.9 988.0,640.8 988.9,639.8 989.9,638.7 990.9,637.7 991.9,636.8" fill="none" stroke="#ff2a10" stroke-width="1.9"/><polyline points="1024.0,624.0 1025.4,624.0 1026.9,624.1 1028.3,624.1 1029.7,624.3 1031.1,624.5 1032.5,624.7 1033.9,624.9 1035.2,625.2 1036.6,625.6 1038.0,625.9 1039.3,626.3 1040.7,626.8 1042.0,627.3 1043.3,627.8 1044.6,628.4 1045.9,629.0 1047.1,629.7 1048.4,630.4 1049.6,631.1 1050.8,631.8 1051.9,632.6 1053.1,633.4 1054.2,634.3 1055.3,635.2 1056.4,636.1 1057.4,637.1 1058.4,638.1" fill="none" stroke="#ff2a10" stroke-width="1.9"/><text x="1004.8" y="629.4" transform="rotate(0 1004.8 629.4)" text-anchor="middle" dominant-baseline="central" font-family="Liberation Sans" font-size="14.3" fill="#b0342c" stroke="#b0342c" stroke-width="0.3">135 °</text><line x1="1042.8" y1="596.3" x2="1050.8" y2="596.3" stroke="#ff2a10" stroke-width="1.6"/><line x1="1017.9" y1="536.2" x2="1023.6" y2="530.5" stroke="#ff2a10" stroke-width="1.6"/><polyline points="1046.8,596.3 1046.8,595.4 1046.8,594.6 1046.8,593.7 1046.7,592.8 1046.7,591.9 1046.6,591.1 1046.6,590.2 1046.5,589.3 1046.5,588.4 1046.4,587.6 1046.3,586.7 1046.2,585.8 1046.1,585.0 1046.0,584.1 1045.8,583.2 1045.7,582.4 1045.6,581.5 1045.4,580.7 1045.3,579.8 1045.1,578.9 1044.9,578.1 1044.7,577.2 1044.5,576.4 1044.3,575.5 1044.1,574.7 1043.9,573.8 1043.7,573.0 1043.5,572.1 1043.2,571.3 1043.0,570.5 1042.7,569.6" fill="none" stroke="#ff2a10" stroke-width="1.9"/><polyline points="1036.3,554.3 1035.9,553.6 1035.5,552.8 1035.0,552.1 1034.6,551.3 1034.1,550.5 1033.7,549.8 1033.2,549.1 1032.8,548.3 1032.3,547.6 1031.8,546.9 1031.3,546.1 1030.8,545.4 1030.3,544.7 1029.8,544.0 1029.3,543.3 1028.8,542.6 1028.2,541.9 1027.7,541.2 1027.1,540.5 1026.6,539.8 1026.0,539.2 1025.5,538.5 1024.9,537.8 1024.3,537.2 1023.7,536.5 1023.2,535.9 1022.6,535.2 1022.0,534.6 1021.3,534.0 1020.7,533.4" fill="none" stroke="#ff2a10" stroke-width="1.9"/><text x="1038.6" y="561.9" transform="rotate(0 1038.6 561.9)" text-anchor="middle" dominant-baseline="central" font-family="Liberation Sans" font-size="14.3" fill="#b0342c" stroke="#b0342c" stroke-width="0.3">45 °</text><text x="699.5" y="596.5" font-family="Liberation Sans" font-weight="bold" font-size="10" fill="#e0301e">I7</text><text x="699.5" y="676.5" font-family="Liberation Sans" font-weight="bold" font-size="10" fill="#e0301e">I7</text><text x="697" y="606" font-family="Liberation Sans" font-weight="bold" font-size="8" fill="#e0301e">r</text><rect x="871" y="656.8" width="8.5" height="2.4" rx="1" fill="#e0301e"/><path d="M1079.8,468.2 h6 M1082.8,465.2 v6" transform="rotate(35 1082.8 468.2)" stroke="#e0301e" stroke-width="1.6"/><path d="M1105.2,485.8 h6 M1108.2,482.8 v6" transform="rotate(35 1108.2 485.8)" stroke="#e0301e" stroke-width="1.6"/><path d="M1121.8,406.4 h6 M1124.8,403.4 v6" transform="rotate(35 1124.8 406.4)" stroke="#e0301e" stroke-width="1.6"/><path d="M1174.8,441.7 h6 M1177.8,438.7 v6" transform="rotate(35 1177.8 441.7)" stroke="#e0301e" stroke-width="1.6"/><line x1="1114" y1="397.7" x2="1070.4" y2="459.3" stroke="#ffffff" stroke-opacity="0.55" stroke-width="0.8" stroke-dasharray="1.5 3"/><line x1="1163.6" y1="432.7" x2="1120" y2="494.3" stroke="#ffffff" stroke-opacity="0.55" stroke-width="0.8" stroke-dasharray="1.5 3"/><rect x="1087.3" y="456.5" width="10" height="10" fill="none" stroke="#ff8a20" stroke-width="3"/><rect x="1124.9" y="441.1" width="10" height="10" fill="none" stroke="#ff8a20" stroke-width="3"/><circle cx="593.8" cy="455.9" r="2.5" fill="#ffa090" fill-opacity="0.9"/><circle cx="637.4" cy="617.5" r="2.5" fill="#ffa090" fill-opacity="0.9"/><circle cx="726.4" cy="672" r="2.5" fill="#ffa090" fill-opacity="0.9"/><circle cx="1024.5" cy="672" r="2.5" fill="#ffa090" fill-opacity="0.9"/><circle cx="1112.8" cy="583.5" r="2.5" fill="#ffa090" fill-opacity="0.9"/><circle cx="1220.8" cy="554.3" r="2.5" fill="#ffa090" fill-opacity="0.9"/><circle cx="1266.8" cy="379.4" r="2.5" fill="#ffa090" fill-opacity="0.9"/><circle cx="1029.3" cy="242.1" r="2.5" fill="#ffa090" fill-opacity="0.9"/><circle cx="892.6" cy="378.6" r="2.5" fill="#ffa090" fill-opacity="0.9"/><circle cx="853.3" cy="525.3" r="2.5" fill="#ffa090" fill-opacity="0.9"/><circle cx="726.4" cy="596.4" r="2.5" fill="#ffa090" fill-opacity="0.9"/><circle cx="957.8" cy="596.3" r="2.5" fill="#ffa090" fill-opacity="0.9"/></svg><svg class="a" style="left:1420px;top:176px" width="116" height="120" viewBox="1420 176 116 120">
  <g fill="#a3a3c2" fill-opacity="0.92">
    <path d="M1471 191.5L1479.5 182L1488 191.5z"/>
    <path d="M1471 278L1488 278L1479.5 287.5z"/>
    <path d="M1436.5 226L1436.5 243.5L1427.5 234.7z"/>
    <path d="M1522.5 226L1522.5 243.5L1531.5 234.7z"/>
    <path d="M1466.4,185.7 L1463.7,186.5 L1461.0,187.5 L1458.4,188.6 L1455.8,189.9 L1453.3,191.3 L1450.9,192.9 L1448.6,194.6 L1446.4,196.4 L1442.8,192.2 L1439.2,210.3 L1453.6,204.7 L1449.6,200.2 L1451.6,198.5 L1453.7,197.0 L1455.9,195.6 L1458.1,194.3 L1460.5,193.2 L1462.8,192.2 L1465.3,191.3 L1467.7,190.6Z"/>
    <path d="M1492.6,185.7 L1495.3,186.5 L1498.0,187.5 L1500.6,188.6 L1503.2,189.9 L1505.7,191.3 L1508.1,192.9 L1510.4,194.6 L1512.6,196.4 L1516.2,192.2 L1519.8,210.3 L1505.4,204.7 L1509.4,200.2 L1507.4,198.5 L1505.3,197.0 L1503.1,195.6 L1500.9,194.3 L1498.5,193.2 L1496.2,192.2 L1493.7,191.3 L1491.3,190.6Z"/>
  </g>
  <path d="M1460 207.8H1498.5Q1505.3 207.8 1505.3 214.6V254Q1505.3 260.8 1498.5 260.8H1460Q1453.2 260.8 1453.2 254V214.6Q1453.2 207.8 1460 207.8z" fill="#a6a6c3"/>
  <g fill="#d0d0e2" opacity="0.9"><circle cx="1459" cy="213.5" r="4.2"/><circle cx="1499.5" cy="213.5" r="4.2"/><circle cx="1459" cy="255" r="4.2"/><circle cx="1499.5" cy="255" r="4.2"/></g>
  <rect x="1459.1" y="214.1" width="40.3" height="40.8" fill="#c9c9dd"/>
  <rect x="1461.5" y="216.5" width="35.5" height="36" fill="none" stroke="#d8d8e8" stroke-width="1"/>
  <text x="1480.6" y="239.3" text-anchor="middle" font-family="Liberation Sans" font-weight="bold" font-size="11.5" fill="#000" transform="translate(1480.6 0) scale(0.78 1) translate(-1480.6 0)">TOP</text>
  <line x1="1460.2" y1="225" x2="1460.2" y2="253.5" stroke="#90ee90" stroke-width="1.2"/>
  <line x1="1460.2" y1="253.8" x2="1488.5" y2="253.8" stroke="#f0a8a8" stroke-width="1.2"/>
  <line x1="1460.2" y1="253.8" x2="1455" y2="259.5" stroke="#3030ff" stroke-width="1.2"/>
  <text x="1464.5" y="215" font-family="Liberation Sans" font-size="5.5" fill="#70d070">Y</text>
  <text x="1500" y="254" font-family="Liberation Sans" font-size="5.5" fill="#f08080">X</text>
  <text x="1451" y="264.5" font-family="Liberation Sans" font-size="6" fill="#2020ff">Z</text>
  <path d="M1498 271L1505 268L1513.5 270.5V280L1506 283L1498 280.5z" fill="#8f8fae"/>
  <path d="M1498 271L1506 273.5L1513.5 270.5M1506 273.5V283" fill="none" stroke="#a8a8c4" stroke-width="0.6"/>
  <path d="M1517.5 273H1526L1521.7 277.3z" fill="#3c3c64"/>
</svg>
<svg class="a" style="left:1495px;top:695px" width="41" height="35" viewBox="1495 695 41 35">
  <line x1="1508.5" y1="723.6" x2="1508.5" y2="707" stroke="#1a9a1a" stroke-width="1.6"/>
  <path d="M1506 708.5L1508.5 702.5L1511 708.5z" fill="#1a9a1a"/>
  <line x1="1508.5" y1="723.6" x2="1524" y2="723.6" stroke="#aa2222" stroke-width="1.6"/>
  <path d="M1523 721.2L1529 723.6L1523 726z" fill="#aa2222"/>
  <circle cx="1508.5" cy="723.6" r="2.2" fill="#2222aa"/>
  <text x="1510" y="701" font-family="Liberation Sans" font-size="7.5" fill="#333">Y</text>
  <text x="1510.5" y="721" font-family="Liberation Sans" font-size="7.5" fill="#222">Z</text>
  <text x="1529.5" y="723.5" font-family="Liberation Sans" font-size="7.5" fill="#333">X</text>
</svg>

<div id="combo" class="a">
  <div class="a" style="left:0;top:1px;width:321px;height:22px;background:#dcdcdc;border:1px solid #c6c6c6"></div>
  <div class="t" style="left:6px;top:8px;font-size:13.6px;color:#222">Combo View</div>
  <svg class="a" style="left:303px;top:7px" width="11" height="11"><rect x="3.5" y="0.5" width="7" height="6" fill="none" stroke="#333" stroke-width="1.3"/><rect x="0.5" y="3.5" width="7" height="6.5" fill="#dcdcdc" stroke="#333" stroke-width="1.3"/></svg>
  <div class="a" style="left:2px;top:29px;width:60px;height:26px;background:#f0f0f0;border:1px solid #d9d9d9;border-bottom:none"></div>
  <div class="t" style="left:14px;top:35px;font-size:13.2px">Model</div>
  <div class="a" style="left:62px;top:27px;width:88px;height:30px;background:#fff;border:1px solid #d9d9d9;border-bottom:none"></div>
  <svg class="a" style="left:78px;top:32px" width="20" height="19" viewBox="0 0 20 19"><path d="M2 3.5L4.5 1L17 13.5L18.5 18L14 16.5z" fill="#3b5a9a" stroke="#1d2f5a" stroke-width="0.8"/><path d="M14 16.5L18.5 18L17 13.5z" fill="#ddd"/></svg>
  <div class="t" style="left:102px;top:35px;font-size:13.2px">Tasks</div>
  <div class="a" style="left:1px;top:55px;width:319px;height:549px;background:#fff;border:1px solid #d0d0d0"></div>
  <div class="a" style="left:4px;top:58px;width:292px;height:542px;background:linear-gradient(#adadc5,#333368);overflow:hidden"><div class="a" style="left:-4px;top:-58px;width:300px;height:700px">
  <div class="btn" style="left:106px;top:80px;width:88px;height:25px;line-height:23px">Close</div>
  <!-- solver messages -->
  <div class="box" style="left:13px;top:127px;width:274px;height:183px">
    <div class="boxh"><div class="t" style="left:28px;top:8px">Solver messages</div>
      <div class="a" style="left:9px;top:6px;width:15px;height:17px;background:linear-gradient(135deg,#fff,#e4e4e4);border:1px solid #9a9a9a"></div>
      <div class="a" style="left:19px;top:3px;width:7px;height:7px;border-radius:50%;background:#f8f04a"></div>
      <div class="col" style="left:248px;top:5px"></div>
      <svg class="a" style="left:252px;top:9px" width="10" height="10"><path d="M1.5 5L5 1.8L8.5 5M1.5 8.8L5 5.6L8.5 8.8" fill="none" stroke="#2a4c9a" stroke-width="1.6"/></svg>
    </div>
    <div class="t" style="left:16px;top:46px;font-size:13.2px">Under-constrained sketch with <span style="color:#1b1be0;text-decoration:underline;background:#e8eefc">2 degrees</span></div>
    <div class="t" style="left:16px;top:63px;font-size:13.2px">of freedom.</div>
    <div class="a" style="left:16px;top:85px;width:89px;height:17px;background:#dfe9e5"></div>
    <div class="t" style="left:16px;top:87px;font-size:13.2px;color:#1e9a1e">Solved in 0 sec</div>
    <div class="cb" style="left:17px;top:112px"></div>
    <div class="t" style="left:37px;top:114px;font-size:13.2px">Auto remove redundants</div>
    <div class="cb" style="left:17px;top:143px"></div>
    <div class="t" style="left:37px;top:145px;font-size:13.2px">Auto update</div>
    <div class="btn" style="left:140px;top:139px;width:114px;height:25px;line-height:23px">Update</div>
  </div>
  <!-- edit controls -->
  <div class="box" style="left:13px;top:320px;width:274px;height:290px">
    <div class="boxh"><div class="t" style="left:28px;top:8px">Edit controls</div>
      <div class="a" style="left:9px;top:6px;width:15px;height:17px;background:linear-gradient(135deg,#fff,#e4e4e4);border:1px solid #9a9a9a"></div>
      <div class="a" style="left:19px;top:3px;width:7px;height:7px;border-radius:50%;background:#f8f04a"></div>
      <div class="col" style="left:248px;top:5px"></div>
      <svg class="a" style="left:252px;top:9px" width="10" height="10"><path d="M1.5 5L5 1.8L8.5 5M1.5 8.8L5 5.6L8.5 8.8" fill="none" stroke="#2a4c9a" stroke-width="1.6"/></svg>
    </div>
    <div class="cb on" style="left:17px;top:47px"></div>
    <div class="t" style="left:37px;top:49px;font-size:13.2px">Show grid</div>
    <div class="t" style="left:16px;top:80px;font-size:13.2px">Grid size:</div>
    <div class="a" style="left:140px;top:73px;width:115px;height:26px;background:#fff;border:1px solid #9a9a9a"></div>
    <div class="t" style="left:142px;top:80px;font-size:13.2px">10.00 mm</div>
    <div class="a" style="left:237px;top:75px;width:1px;height:22px;background:#d0d0d0"></div>
    <svg class="a" style="left:240px;top:78px" width="10" height="16"><path d="M1 6L5 2L9 6z M1 10L5 14L9 10z" fill="#222"/></svg>
    <div class="cb on" style="left:17px;top:110px"></div>
    <div class="t" style="left:37px;top:112px;font-size:13.2px">Grid snap</div>
    <div class="cb on" style="left:17px;top:139px"></div>
    <div class="t" style="left:37px;top:141px;font-size:13.2px">Auto constraints</div>
    <div class="cb on" style="left:17px;top:168px"></div>
    <div class="t" style="left:37px;top:170px;font-size:13.2px">Avoid redundant auto constraints</div>
    <div class="t" style="left:16px;top:196px;font-size:13.2px">Rendering order (global):</div>
    <div class="a" style="left:16px;top:217px;width:239px;height:76px;background:#fff;border:1px solid #b8b8b8"></div>
    <div class="t" style="left:22px;top:225px;font-size:13.2px">Normal Geometry</div>
    <div class="t" style="left:22px;top:247px;font-size:13.2px">Construction Geometry</div>
    <div class="t" style="left:22px;top:269px;font-size:13.2px">External Geometry</div>
  </div>
</div></div>
  <div class="a" style="left:296px;top:58px;width:20px;height:542px;background:#f0f0f0"></div>
  <div class="a" style="left:296px;top:79px;width:20px;height:183px;background:#cdcdcd"></div>
  <svg class="a" style="left:300px;top:66px" width="12" height="8"><path d="M1 7L6 2L11 7" fill="none" stroke="#555" stroke-width="1.8"/></svg>
  <svg class="a" style="left:300px;top:585px" width="12" height="8"><path d="M1 1L6 6L11 1" fill="none" stroke="#555" stroke-width="1.8"/></svg>
  <div class="a" style="left:316px;top:58px;width:1px;height:542px;background:#a0a0b4"></div>
  <div class="a" style="left:1px;top:600px;width:319px;height:4px;background:#fff;border-top:1px solid #b9b9c0"></div>
  <div class="a" style="left:0;top:604px;width:322px;height:5px;background:#f0f0f0"></div>
</div>
<!-- tabs -->
<div class="a" style="left:327px;top:752px;width:1209px;height:33px;background:#f0f0f0"></div>
<div class="a" style="left:330px;top:752px;width:130px;height:26px;background:#f0f0f0;border:1px solid #d9d9d9;border-top:none"></div>
<div class="a" style="left:464px;top:752px;width:161px;height:29px;background:#fff;border:1px solid #d9d9d9;border-top:none"></div>
<svg class="a" style="left:341px;top:756px" width="22" height="20" viewBox="0 0 22 20">
  <path d="M1 1h10v3.5H4.5v3.5h5v3.5h-5V19H1z" fill="#d8141e"/>
  <g transform="translate(14 13)"><circle r="5" fill="#3f6fb4"/><circle r="2" fill="#fff"/>
  <g fill="#3f6fb4"><rect x="-1.3" y="-6.6" width="2.6" height="2.8"/><rect x="-1.3" y="3.8" width="2.6" height="2.8"/><rect x="-6.6" y="-1.3" width="2.8" height="2.6"/><rect x="3.8" y="-1.3" width="2.8" height="2.6"/><rect x="-1.3" y="-6.6" width="2.6" height="2.8" transform="rotate(45)"/><rect x="-1.3" y="3.8" width="2.6" height="2.8" transform="rotate(45)"/><rect x="-6.6" y="-1.3" width="2.8" height="2.6" transform="rotate(45)"/><rect x="3.8" y="-1.3" width="2.8" height="2.6" transform="rotate(45)"/></g></g>
</svg>
<div class="a" style="left:431px;top:757px;width:17px;height:17px;background:#cfcfcf;border:1px solid #a8a8a8"></div>
<svg class="a" style="left:434px;top:760px" width="11" height="11"><path d="M2 2L9 9M9 2L2 9" stroke="#fff" stroke-width="2"/></svg>
<svg class="a" style="left:479px;top:758px" width="22" height="20" viewBox="0 0 22 20">
  <path d="M1 1h10v3.5H4.5v3.5h5v3.5h-5V19H1z" fill="#d8141e"/>
  <g transform="translate(14 13)"><circle r="5" fill="#3f6fb4"/><circle r="2" fill="#fff"/>
  <g fill="#3f6fb4"><rect x="-1.3" y="-6.6" width="2.6" height="2.8"/><rect x="-1.3" y="3.8" width="2.6" height="2.8"/><rect x="-6.6" y="-1.3" width="2.8" height="2.6"/><rect x="3.8" y="-1.3" width="2.8" height="2.6"/><rect x="-1.3" y="-6.6" width="2.6" height="2.8" transform="rotate(45)"/><rect x="-1.3" y="3.8" width="2.6" height="2.8" transform="rotate(45)"/><rect x="-6.6" y="-1.3" width="2.8" height="2.6" transform="rotate(45)"/><rect x="3.8" y="-1.3" width="2.8" height="2.6" transform="rotate(45)"/></g></g>
</svg>
<div class="a" style="left:592px;top:758px;width:17px;height:17px;background:#e8663a;border:1px solid #c04a20"></div>
<svg class="a" style="left:595px;top:761px" width="11" height="11"><path d="M2 2L9 9M9 2L2 9" stroke="#fff" stroke-width="2"/></svg>

<div class="t" style="left:365px;top:759px;font-size:13.2px">Start page</div>
<div class="t" style="left:503px;top:761px;font-size:13.2px">Unnamed : 1*</div>
<!-- status -->
<div class="t" style="left:3px;top:793px;font-size:13.1px">Preselected: Unnamed.Body.Sketch.Edge6 (85.457718 mm,22.173143 mm,8.000000 µm)</div>
<div class="a" style="left:1282px;top:785px;width:1px;height:28px;background:#d0d0d0"></div>
<div class="a" style="left:1383px;top:785px;width:1px;height:28px;background:#d0d0d0"></div>
<svg class="a" style="left:1300px;top:790px" width="18" height="19" viewBox="0 0 18 19"><circle cx="14.5" cy="4" r="3" fill="#333"/><circle cx="3.5" cy="15" r="3" fill="#333"/><path d="M2 6Q3 1 10 3M16 13Q15 18 8 16" fill="none" stroke="#777" stroke-width="2.2"/></svg>
<div class="a" style="left:1321px;top:785px;width:42px;height:28px;overflow:hidden"><div class="t" style="left:0;top:8px;font-size:13.2px">Gesture</div></div>
<svg class="a" style="left:1366px;top:797px" width="7" height="4"><path d="M0 0h7L3.5 4z" fill="#111"/></svg>
<div class="t" style="left:1389px;top:793px;font-size:13.2px">382.65 mm x 182.21 mm</div>
</body></html>
